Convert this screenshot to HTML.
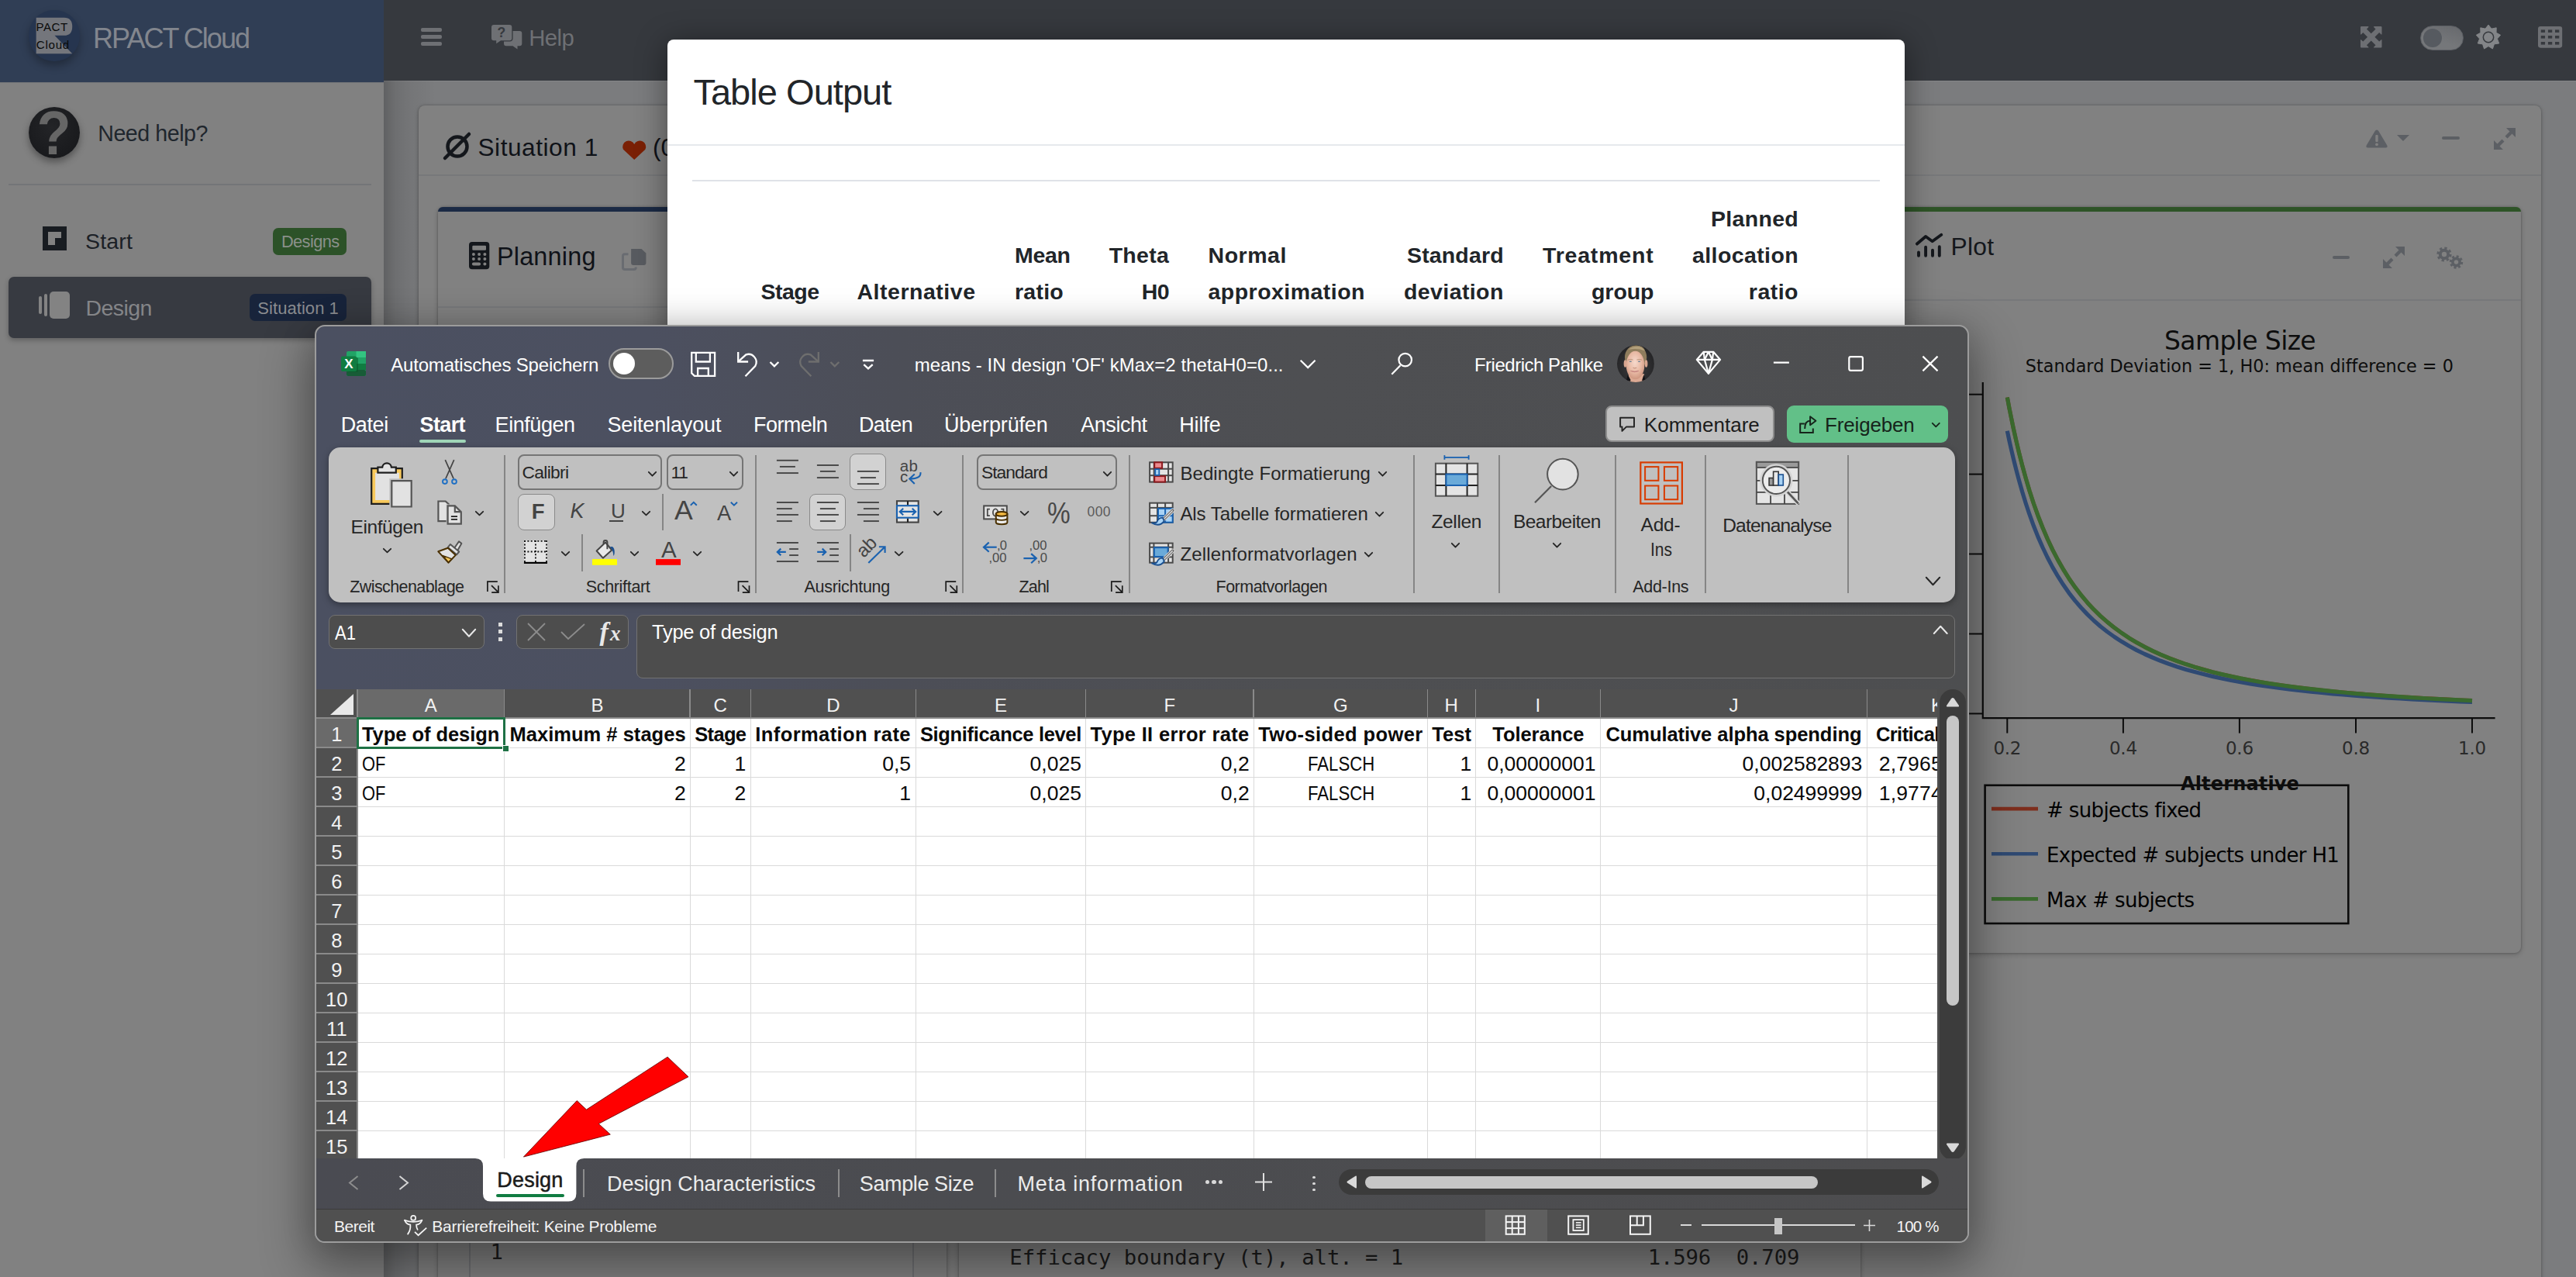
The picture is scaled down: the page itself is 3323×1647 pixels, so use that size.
<!DOCTYPE html>
<html lang="de">
<head>
<meta charset="utf-8">
<title>RPACT Cloud</title>
<style>
*{box-sizing:border-box;margin:0;padding:0}
html,body{width:3323px;height:1647px;overflow:hidden}
body{position:relative;background:#7b7c7e;font-family:"Liberation Sans",sans-serif;color:#111}
.abs{position:absolute}
.t{position:absolute;white-space:nowrap;line-height:1}
svg{position:absolute;overflow:visible}
/* ---------- page ---------- */
#navbar{left:495px;top:0;width:2828px;height:105px;background:#36393e;border-bottom:1.5px solid #858688}
#brand{left:0;top:0;width:495px;height:106.5px;background:#303e55;border-bottom:1.7px solid #737578}
#sidebar{left:0;top:106px;width:495px;height:1541px;background:#818181}
#sideshadow{left:495px;top:104px;width:70px;height:1543px;background:linear-gradient(90deg,rgba(0,0,0,.22) 0,rgba(0,0,0,.11) 15px,rgba(0,0,0,.05) 35px,rgba(0,0,0,0) 68px)}
#sitcard{left:540px;top:136px;width:2738px;height:1530px;background:#818181;border-radius:8px;box-shadow:0 0 3px rgba(0,0,0,.25),0 2px 6px rgba(0,0,0,.2)}
/* ---------- modal ---------- */
#modal{left:861px;top:51px;width:1596px;height:600px;background:#fff;border-radius:8px;box-shadow:0 6px 40px rgba(0,0,0,.45);overflow:hidden}
#modal>.in{position:absolute;left:-861px;top:-51px;width:3323px;height:1647px}
/* ---------- excel ---------- */
#excelshadow{left:406px;top:419px;width:2133.5px;height:1184px;border-radius:13px;box-shadow:0 28px 64px 8px rgba(0,0,0,.33),0 4px 44px rgba(0,0,0,.17)}
#excel{left:406px;top:419px;width:2133.5px;height:1184px;border-radius:13px;border:2px solid #9c9c9c;background:linear-gradient(90deg,#4b5061 0%,#4c5060 20%,#4c4e57 35%,#4e4f52 60%,#4d4e50 100%);overflow:hidden}
#excel>.in{position:absolute;left:-408px;top:-421px;width:3323px;height:1647px}
</style>
</head>
<body>
<div id="root" style="position:absolute;left:0;top:0;width:3323px;height:1647px;overflow:hidden">
<!-- ======== PAGE ======== -->
<div id="app">
<div class="abs" id="navbar"></div>
<div class="abs" id="sidebar"></div>
<div class="abs" id="sideshadow"></div>
<div class="abs" id="brand"></div>
<div class="abs" id="sitcard"></div>
<!-- brand -->
<div class="abs" style="left:37.4px;top:13.2px;width:65.3px;height:65.5px;border-radius:50%;background:#26354f;box-shadow:0 6px 12px rgba(0,0,0,.3)"></div>
<svg style="left:20px;top:0" width="120" height="100" viewBox="0 0 1532 1277"><path d="M340 290 H800 Q935 290 935 437 Q935 585 800 585 H645 L935 885 H340 Z" fill="#74767c"/></svg>
<div class="t" style="left:46.4px;top:27.1px;font-size:15.1px;color:#0a0a0a;letter-spacing:.55px">PACT</div>
<div class="t" style="left:46.8px;top:50.2px;font-size:15.1px;color:#0a0a0a;letter-spacing:.75px">Cloud</div>
<div class="t" style="left:120px;top:32px;font-size:36px;color:#82868e;letter-spacing:-1.98px">RPACT Cloud</div>
<!-- user panel -->
<div class="abs" style="left:37.3px;top:138px;width:66.2px;height:66.2px;border-radius:50%;background:radial-gradient(circle at 45% 40%,#232427,#18191c 80%);box-shadow:0 5px 10px rgba(0,0,0,.35)"></div>
<div class="t" style="left:44.5px;top:131.9px;font-size:80px;font-weight:bold;color:#666666;transform:scaleX(.9);">?</div>
<div class="t" style="left:126.2px;top:157.5px;font-size:28.6px;letter-spacing:-0.45px;color:#1f262d;">Need help?</div>
<div class="abs" style="left:11px;top:237px;width:468px;height:2px;background:#737578"></div>
<!-- nav: Start -->
<div class="abs" style="left:55px;top:292px;width:31px;height:31px;background:#181c21"></div>
<div class="abs" style="left:62px;top:299px;width:17px;height:8px;background:#818181"></div>
<div class="abs" style="left:62px;top:299px;width:9px;height:17px;background:#818181"></div>
<div class="t" style="left:110.0px;top:297.0px;font-size:28.5px;letter-spacing:0.18px;color:#1b2026;">Start</div>
<div class="abs" style="left:352px;top:294px;width:95px;height:35px;border-radius:7px;background:#2c5228"></div>
<div class="t" style="left:362.9px;top:301.4px;font-size:21.8px;letter-spacing:-0.59px;color:#8a908a;">Designs</div>
<!-- nav: Design (active) -->
<div class="abs" style="left:11px;top:357px;width:468px;height:79px;border-radius:7px;background:#373a41;box-shadow:0 3px 6px rgba(0,0,0,.25)"></div>
<div class="abs" style="left:50px;top:382px;width:4px;height:23px;border-radius:2px;background:#838383"></div>
<div class="abs" style="left:57px;top:379px;width:4px;height:29px;border-radius:2px;background:#838383"></div>
<div class="abs" style="left:64px;top:376px;width:26px;height:35px;border-radius:5px;background:#838383"></div>
<div class="t" style="left:110.6px;top:382.8px;font-size:28.5px;letter-spacing:-0.60px;color:#848588;">Design</div>
<div class="abs" style="left:322px;top:379px;width:125px;height:35px;border-radius:7px;background:#18243b"></div>
<div class="t" style="left:332.3px;top:386.5px;font-size:22px;letter-spacing:0.06px;color:#8a8c90;">Situation 1</div>
<!-- navbar -->
<div class="abs" style="left:543px;top:36px;width:27px;height:5px;border-radius:2px;background:#6e7074"></div>
<div class="abs" style="left:543px;top:45px;width:27px;height:5px;border-radius:2px;background:#6e7074"></div>
<div class="abs" style="left:543px;top:54px;width:27px;height:5px;border-radius:2px;background:#6e7074"></div>
<svg style="left:633.9px;top:31.8px" width="40" height="32" viewBox="0 0 40 32"><path d="M19 8 H36.3 Q39.3 8 39.3 11 V24.3 Q39.3 27.3 36.3 27.3 H33.5 V31.4 L27.5 27.3 H19 Q16 27.3 16 24.3 V11 Q16 8 19 8Z" fill="#6e7074"/><path d="M3 0 H23.3 Q26.3 0 26.3 3 V17.2 Q26.3 20.2 23.3 20.2 H12 L6.2 24.2 V20.2 H3 Q0 20.2 0 17.2 V3 Q0 0 3 0Z" fill="#6e7074" stroke="#36393e" stroke-width="2.6" paint-order="stroke"/><text x="12.8" y="16.3" font-family="Liberation Sans" font-weight="bold" font-size="17.5" fill="#36393e" text-anchor="middle">?</text></svg>
<div class="t" style="left:682.2px;top:34.1px;font-size:29.3px;letter-spacing:-0.52px;color:#6e7074;">Help</div>
<!-- navbar right icons -->
<svg style="left:3044.9px;top:33.8px" width="27.5" height="27.7" viewBox="0 0 100 100" fill="#6d6f73"><path d="M4 0H36Q40 0 37 4L29 12L50 33L71 12L63 4Q60 0 64 0H96Q100 0 100 4V36Q100 40 96 37L88 29L67 50L88 71L96 63Q100 60 100 64V96Q100 100 96 100H64Q60 100 63 96L71 88L50 67L29 88L37 96Q40 100 36 100H4Q0 100 0 96V64Q0 60 4 63L12 71L33 50L12 29L4 37Q0 40 0 36V4Q0 0 4 0Z"/></svg>
<div class="abs" style="left:3122.1px;top:32.9px;width:55.8px;height:32.1px;border-radius:16px;background:linear-gradient(200deg,#66686c,#75777a 60%);border:1.5px solid #5c5f64"></div>
<div class="abs" style="left:3125.9px;top:36.8px;width:24.2px;height:24.2px;border-radius:50%;background:#565a60"></div>
<svg style="left:3193.6px;top:31.6px" width="32" height="32" viewBox="-16 -16 32 32"><path d="M0.00 -15.90L3.97 -10.90L10.22 -12.18L10.05 -5.80L15.66 -2.76L11.42 2.01L13.77 7.95L7.46 8.89L5.44 14.94L0.00 11.60L-5.44 14.94L-7.46 8.89L-13.77 7.95L-11.42 2.01L-15.66 -2.76L-10.05 -5.80L-10.22 -12.18L-3.97 -10.90Z" fill="#838588" stroke="#838588" stroke-width="1" stroke-linejoin="round"/><circle r="6.7" fill="none" stroke="#36393e" stroke-width="1.5"/></svg>
<svg style="left:3274.1px;top:33.8px" width="31.2" height="27.7" viewBox="0 0 265 235"><rect width="265" height="235" rx="26" fill="#6d6f73"/><rect x="32" y="37" width="45" height="30" fill="#36393e"/><rect x="32" y="102" width="45" height="30" fill="#36393e"/><rect x="32" y="170" width="45" height="30" fill="#36393e"/><rect x="110" y="37" width="45" height="30" fill="#36393e"/><rect x="110" y="102" width="45" height="30" fill="#36393e"/><rect x="110" y="170" width="45" height="30" fill="#36393e"/><rect x="187" y="37" width="45" height="30" fill="#36393e"/><rect x="187" y="102" width="45" height="30" fill="#36393e"/><rect x="187" y="170" width="45" height="30" fill="#36393e"/></svg>
<!-- Situation card header -->
<div class="abs" style="left:540px;top:225px;width:2738px;height:2px;background:#77787a"></div>
<svg style="left:572px;top:171px" width="36" height="36" viewBox="0 0 36 36"><circle cx="18" cy="18" r="12.5" fill="none" stroke="#14171c" stroke-width="4.5"/><path d="M2 33L33 2" stroke="#14171c" stroke-width="4.5" stroke-linecap="round"/></svg>
<div class="t" style="left:616.5px;top:174.5px;font-size:31.6px;letter-spacing:0.54px;color:#0f1218;">Situation 1</div>
<svg style="left:801.6px;top:182.4px" width="32.4" height="24" viewBox="0 0 32 24"><path d="M16 24 L1.8 10.8 A7.55 7.55 0 0 1 16 3.9 A7.55 7.55 0 0 1 30.2 10.8Z" fill="#7a2005"/></svg>
<div class="t" style="left:842.0px;top:174.5px;font-size:31.6px;color:#0f1218;">(0</div>
<!-- sitcard right tools -->
<svg style="left:3052px;top:167px" width="28" height="24" viewBox="0 0 28 24"><path d="M14 0.5 Q15.5 0.5 16.3 2 L27.3 20.5 Q28.5 23.5 25.5 23.5 H2.5 Q-0.5 23.5 0.7 20.5 L11.7 2 Q12.5 0.5 14 0.5Z" fill="#5c5f64"/><rect x="12.3" y="7" width="3.4" height="9" rx="1" fill="#818181"/><circle cx="14" cy="19.3" r="1.9" fill="#818181"/></svg>
<svg style="left:3092px;top:174px" width="16" height="8" viewBox="0 0 16 8"><path d="M0 0H16L8 8Z" fill="#5c5f64"/></svg>
<div class="abs" style="left:3150px;top:176px;width:23px;height:4px;border-radius:2px;background:#5c5f64"></div>
<svg class="exp" style="left:3217px;top:165px" width="28" height="28" viewBox="0 0 28 28" fill="#5c5f64"><path d="M16 0H28V12L23.5 7.5L17.5 13.5L14.5 10.5L20.5 4.5Z"/><path d="M12 28H0V16L4.5 20.5L10.5 14.5L13.5 17.5L7.5 23.5Z"/></svg>
<!-- Planning card -->
<div class="abs" style="left:565px;top:267px;width:656px;height:1395px;border-radius:8px;background:#818181;box-shadow:0 0 3px rgba(0,0,0,.25),0 2px 6px rgba(0,0,0,.2)"></div>
<div class="abs" style="left:565px;top:267px;width:656px;height:6px;border-radius:8px 8px 0 0;background:#1b2a45"></div>
<div class="abs" style="left:565px;top:395px;width:656px;height:2px;background:#77787a"></div>
<svg style="left:605.3px;top:312px" width="26.3" height="35.2" viewBox="0 0 26.3 35.2"><rect width="26.3" height="35.2" rx="4" fill="#14171c"/><rect x="4.3" y="4.8" width="17.7" height="6" rx="1.2" fill="#818181"/><g fill="#818181"><circle cx="5.9" cy="15.9" r="2"/><circle cx="13.1" cy="15.9" r="2"/><circle cx="20.4" cy="15.9" r="2"/><circle cx="5.9" cy="22.1" r="2"/><circle cx="13.1" cy="22.1" r="2"/><circle cx="20.4" cy="22.1" r="2"/><rect x="3.9" y="26.4" width="11.2" height="4" rx="2"/><circle cx="20.4" cy="28.4" r="2"/></g></svg>
<div class="t" style="left:640.9px;top:315.0px;font-size:32.4px;letter-spacing:0.22px;color:#0f1218;">Planning</div>
<svg style="left:801.9px;top:321px" width="31.4" height="28" viewBox="0 0 31.4 28"><path d="M12.1 0H25.5L31.4 5.5V18Q31.4 21 28.4 21H15.1Q12.1 21 12.1 18Z" fill="#585b60"/><path d="M8.5 6.8H4Q1.5 6.8 1.5 9.3V24Q1.5 26.5 4 26.5H15.8Q18.3 26.5 18.3 24V23.5" fill="none" stroke="#696c71" stroke-width="3"/></svg>
<!-- Plot card -->
<div class="abs" style="left:2432px;top:267px;width:820px;height:962px;border-radius:8px;background:#818181;box-shadow:0 0 3px rgba(0,0,0,.25),0 2px 6px rgba(0,0,0,.2)"></div>
<div class="abs" style="left:2432px;top:267px;width:820px;height:6px;border-radius:8px 8px 0 0;background:#2e5427"></div>
<div class="abs" style="left:2432px;top:386px;width:820px;height:2px;background:#77787a"></div>
<svg style="left:2471.1px;top:301.1px" width="34.8" height="30.8" viewBox="0 0 34.8 30.8"><g stroke="#14171c" stroke-width="3.9" stroke-linecap="round" fill="none"><path d="M4 24.4V28.8M13.1 17.8V28.8M22 21.8V28.8M30.8 17.3V28.8"/><path d="M1.9 13.6L13.1 4L21.7 10.3L33.3 1.8" stroke-linejoin="round"/></g></svg>
<div class="t" style="left:2516.5px;top:302.5px;font-size:31.8px;letter-spacing:0.23px;color:#14171c;">Plot</div>
<div class="abs" style="left:3009px;top:330px;width:22px;height:4px;border-radius:2px;background:#5c5f64"></div>
<svg style="left:3074px;top:318px" width="28" height="28" viewBox="0 0 28 28" fill="#5c5f64"><path d="M16 0H28V12L23.5 7.5L17.5 13.5L14.5 10.5L20.5 4.5Z"/><path d="M12 28H0V16L4.5 20.5L10.5 14.5L13.5 17.5L7.5 23.5Z"/></svg>
<svg style="left:3144px;top:319px" width="34" height="28" viewBox="0 0 34 28"><g fill="none" stroke="#5c5f64"><circle cx="9" cy="9" r="5.2" stroke-width="4"/><circle cx="9" cy="9" r="8" stroke-width="3.2" stroke-dasharray="3.2 3.1"/><circle cx="24.5" cy="19" r="4.6" stroke-width="3.6"/><circle cx="24.5" cy="19" r="7.2" stroke-width="3" stroke-dasharray="2.9 2.75"/></g></svg>
<div class="t" style="left:2792.0px;top:423.3px;font-size:33px;font-family:'DejaVu Sans',sans-serif;letter-spacing:-0.63px;color:#0d0d0d;">Sample Size</div>
<div class="t" style="left:2612.8px;top:460.6px;font-size:22.3px;font-family:'DejaVu Sans',sans-serif;letter-spacing:0.01px;color:#0d0d0d;">Standard Deviation = 1, H0: mean difference = 0</div>
<svg style="left:0;top:0" width="3323" height="1647" viewBox="0 0 3323 1647"><path d="M2557.8 493V926.2H3218.6" fill="none" stroke="#0c0c0c" stroke-width="2.2"/><path d="M2539.8 508.7H2557.8" stroke="#0c0c0c" stroke-width="2"/><path d="M2539.8 611.6H2557.8" stroke="#0c0c0c" stroke-width="2"/><path d="M2539.8 714.5H2557.8" stroke="#0c0c0c" stroke-width="2"/><path d="M2539.8 817.5H2557.8" stroke="#0c0c0c" stroke-width="2"/><path d="M2539.8 920.4H2557.8" stroke="#0c0c0c" stroke-width="2"/><path d="M2589.3 926V945.6" stroke="#0c0c0c" stroke-width="2"/><path d="M2738.9 926V945.6" stroke="#0c0c0c" stroke-width="2"/><path d="M2888.9 926V945.6" stroke="#0c0c0c" stroke-width="2"/><path d="M3039 926V945.6" stroke="#0c0c0c" stroke-width="2"/><path d="M3189 926V945.6" stroke="#0c0c0c" stroke-width="2"/><path d="M2589.3 512.4L2590.2 517.0L2591.9 526.2L2594.3 538.1L2597.2 552.1L2600.6 567.3L2604.4 583.4L2608.6 600.0L2613.2 616.6L2618.1 633.2L2623.4 649.5L2629.0 665.2L2635.0 680.5L2641.2 695.0L2647.7 708.9L2654.6 722.1L2661.7 734.5L2669.0 746.2L2676.7 757.2L2684.6 767.5L2692.7 777.2L2701.1 786.2L2709.7 794.6L2718.6 802.4L2727.7 809.7L2737.1 816.5L2746.6 822.9L2756.4 828.8L2766.5 834.3L2776.7 839.4L2787.1 844.2L2797.8 848.6L2808.6 852.7L2819.7 856.6L2831.0 860.2L2842.5 863.5L2854.1 866.7L2866.0 869.6L2878.1 872.3L2890.3 874.9L2902.8 877.2L2915.4 879.5L2928.2 881.6L2941.2 883.5L2954.4 885.4L2967.8 887.1L2981.3 888.7L2995.0 890.2L3008.9 891.7L3023.0 893.0L3037.3 894.3L3051.7 895.5L3066.3 896.6L3081.0 897.7L3096.0 898.7L3111.1 899.6L3126.3 900.5L3141.7 901.3L3157.3 902.1L3173.1 902.9L3189.0 903.6" fill="none" stroke="#8e3524" stroke-width="5" stroke-linejoin="round"/><path d="M2589.3 555.8L2590.2 559.9L2591.9 568.1L2594.3 578.7L2597.2 591.2L2600.6 604.8L2604.4 619.2L2608.6 634.0L2613.2 648.9L2618.1 663.7L2623.4 678.3L2629.0 692.4L2635.0 706.0L2641.2 719.0L2647.7 731.4L2654.6 743.2L2661.7 754.3L2669.0 764.8L2676.7 774.6L2684.6 783.8L2692.7 792.4L2701.1 800.5L2709.7 808.0L2718.6 815.0L2727.7 821.5L2737.1 827.6L2746.6 833.3L2756.4 838.6L2766.5 843.5L2776.7 848.0L2787.1 852.3L2797.8 856.3L2808.6 860.0L2819.7 863.4L2831.0 866.6L2842.5 869.6L2854.1 872.4L2866.0 875.0L2878.1 877.5L2890.3 879.7L2902.8 881.9L2915.4 883.9L2928.2 885.7L2941.2 887.5L2954.4 889.1L2967.8 890.7L2981.3 892.1L2995.0 893.5L3008.9 894.8L3023.0 896.0L3037.3 897.1L3051.7 898.2L3066.3 899.2L3081.0 900.1L3096.0 901.0L3111.1 901.9L3126.3 902.6L3141.7 903.4L3157.3 904.1L3173.1 904.8L3189.0 905.4" fill="none" stroke="#2f4a73" stroke-width="5.2" stroke-linejoin="round"/><path d="M2589.3 512.4L2590.2 517.0L2591.9 526.2L2594.3 538.1L2597.2 552.1L2600.6 567.3L2604.4 583.4L2608.6 600.0L2613.2 616.6L2618.1 633.2L2623.4 649.5L2629.0 665.2L2635.0 680.5L2641.2 695.0L2647.7 708.9L2654.6 722.1L2661.7 734.5L2669.0 746.2L2676.7 757.2L2684.6 767.5L2692.7 777.2L2701.1 786.2L2709.7 794.6L2718.6 802.4L2727.7 809.7L2737.1 816.5L2746.6 822.9L2756.4 828.8L2766.5 834.3L2776.7 839.4L2787.1 844.2L2797.8 848.6L2808.6 852.7L2819.7 856.6L2831.0 860.2L2842.5 863.5L2854.1 866.7L2866.0 869.6L2878.1 872.3L2890.3 874.9L2902.8 877.2L2915.4 879.5L2928.2 881.6L2941.2 883.5L2954.4 885.4L2967.8 887.1L2981.3 888.7L2995.0 890.2L3008.9 891.7L3023.0 893.0L3037.3 894.3L3051.7 895.5L3066.3 896.6L3081.0 897.7L3096.0 898.7L3111.1 899.6L3126.3 900.5L3141.7 901.3L3157.3 902.1L3173.1 902.9L3189.0 903.6" fill="none" stroke="#3a6a2e" stroke-width="5.2" stroke-linejoin="round"/><rect x="2560.6" y="1012.8" width="468.7" height="178.2" fill="none" stroke="#0c0c0c" stroke-width="2.6"/><path d="M2569 1043.1H2629" stroke="#7e2e1d" stroke-width="4.6"/><path d="M2569 1101.3H2629" stroke="#2f4a73" stroke-width="4.6"/><path d="M2569 1159.4H2629" stroke="#3a6a2e" stroke-width="4.6"/></svg>
<div class="t" style="left:2571.4px;top:953.8px;font-size:23px;font-family:'DejaVu Sans',sans-serif;letter-spacing:-0.26px;color:#2a2a2a;">0.2</div>
<div class="t" style="left:2721.0px;top:953.8px;font-size:23px;font-family:'DejaVu Sans',sans-serif;letter-spacing:-0.26px;color:#2a2a2a;">0.4</div>
<div class="t" style="left:2871.0px;top:953.8px;font-size:23px;font-family:'DejaVu Sans',sans-serif;letter-spacing:-0.26px;color:#2a2a2a;">0.6</div>
<div class="t" style="left:3021.1px;top:953.8px;font-size:23px;font-family:'DejaVu Sans',sans-serif;letter-spacing:-0.26px;color:#2a2a2a;">0.8</div>
<div class="t" style="left:3171.1px;top:953.8px;font-size:23px;font-family:'DejaVu Sans',sans-serif;letter-spacing:-0.26px;color:#2a2a2a;">1.0</div>
<div class="t" style="left:2813.0px;top:998.7px;font-size:24px;font-weight:bold;font-family:'DejaVu Sans',sans-serif;letter-spacing:0.16px;color:#0d0d0d;">Alternative</div>
<div class="t" style="left:2640.0px;top:1032.0px;font-size:26px;font-family:'DejaVu Sans',sans-serif;letter-spacing:-0.63px;color:#000;"># subjects fixed</div>
<div class="t" style="left:2640.0px;top:1090.3px;font-size:26px;font-family:'DejaVu Sans',sans-serif;letter-spacing:-0.68px;color:#000;">Expected # subjects under H1</div>
<div class="t" style="left:2640.0px;top:1148.0px;font-size:26px;font-family:'DejaVu Sans',sans-serif;letter-spacing:-0.67px;color:#000;">Max # subjects</div>
<!-- bottom output -->
<div class="abs" style="left:1237px;top:267px;width:1163px;height:1395px;border-radius:8px;background:#818181;box-shadow:0 0 3px rgba(0,0,0,.25),0 2px 6px rgba(0,0,0,.2)"></div>
<div class="abs" style="left:605px;top:1400px;width:574px;height:260px;border-radius:8px;border:2px solid #6e6f72"></div>
<div class="t" style="left:632.5px;top:1600.9px;font-size:27.3px;font-family:'DejaVu Sans Mono',monospace;color:#1c1c1c;">1</div>
<div class="t" style="left:1302.3px;top:1607.7px;font-size:27.3px;font-family:'DejaVu Sans Mono',monospace;letter-spacing:-0.05px;color:#1c1c1c;">Efficacy boundary (t), alt. = 1</div>
<div class="t" style="left:2125.7px;top:1607.7px;font-size:27.3px;font-family:'DejaVu Sans Mono',monospace;letter-spacing:-0.14px;color:#1c1c1c;white-space:pre;">1.596  0.709</div>

<!--BOTTOM-->

</div>
<!-- ======== MODAL ======== -->
<div class="abs" id="modal"><div class="in">
<div class="t" style="left:894.4px;top:94.9px;font-size:47px;letter-spacing:-0.96px;color:#212529;">Table Output</div>
<div class="abs" style="left:861px;top:185.5px;width:1596px;height:2px;background:#e6e9ed"></div>
<div class="abs" style="left:893px;top:231.5px;width:1532px;height:2px;background:#dfe2e8"></div>
<div class="t" style="left:981.4px;top:361.6px;font-size:28.5px;font-weight:bold;letter-spacing:-0.46px;color:#212529;">Stage</div>
<div class="t" style="left:1105.5px;top:361.6px;font-size:28.5px;font-weight:bold;letter-spacing:0.52px;color:#212529;">Alternative</div>
<div class="t" style="left:1309.0px;top:314.9px;font-size:28.5px;font-weight:bold;letter-spacing:-0.29px;color:#212529;">Mean</div>
<div class="t" style="left:1309.0px;top:361.6px;font-size:28.5px;font-weight:bold;letter-spacing:0.25px;color:#212529;">ratio</div>
<div class="t" style="left:1430.7px;top:314.9px;font-size:28.5px;font-weight:bold;letter-spacing:0.26px;color:#212529;">Theta</div>
<div class="t" style="left:1472.7px;top:361.6px;font-size:28.5px;font-weight:bold;letter-spacing:-0.57px;color:#212529;">H0</div>
<div class="t" style="left:1558.5px;top:314.9px;font-size:28.5px;font-weight:bold;letter-spacing:0.55px;color:#212529;">Normal</div>
<div class="t" style="left:1558.5px;top:361.6px;font-size:28.5px;font-weight:bold;letter-spacing:0.47px;color:#212529;">approximation</div>
<div class="t" style="left:1815.0px;top:314.9px;font-size:28.5px;font-weight:bold;letter-spacing:0.15px;color:#212529;">Standard</div>
<div class="t" style="left:1811.0px;top:361.6px;font-size:28.5px;font-weight:bold;letter-spacing:0.40px;color:#212529;">deviation</div>
<div class="t" style="left:1990.0px;top:314.9px;font-size:28.5px;font-weight:bold;letter-spacing:0.81px;color:#212529;">Treatment</div>
<div class="t" style="left:2053.0px;top:361.6px;font-size:28.5px;font-weight:bold;letter-spacing:-0.05px;color:#212529;">group</div>
<div class="t" style="left:2207.0px;top:267.9px;font-size:28.5px;font-weight:bold;letter-spacing:0.31px;color:#212529;">Planned</div>
<div class="t" style="left:2183.0px;top:314.9px;font-size:28.5px;font-weight:bold;letter-spacing:0.40px;color:#212529;">allocation</div>
<div class="t" style="left:2255.8px;top:361.6px;font-size:28.5px;font-weight:bold;letter-spacing:0.49px;color:#212529;">ratio</div>

</div></div>
<!-- ======== EXCEL ======== -->
<div class="abs" id="excelshadow"></div>
<div class="abs" id="excel"><div class="in">
<!-- title bar -->
<div class="t" style="left:504.2px;top:459.2px;font-size:24px;letter-spacing:-0.18px;color:#ffffff;">Automatisches Speichern</div>
<div class="abs" style="left:785.2px;top:449.2px;width:83.7px;height:39.5px;background:#5d5d5d;border:2px solid #9b9b9b;border-radius:20px;"></div>
<div class="abs" style="left:791.0px;top:455.0px;width:28.0px;height:28.0px;background:#fff;border-radius:14px;"></div>
<div class="t" style="left:1179.7px;top:458.7px;font-size:24px;letter-spacing:0.06px;color:#ffffff;">means - IN design 'OF' kMax=2 thetaH0=0...</div>
<div class="t" style="left:1901.9px;top:458.7px;font-size:24px;letter-spacing:-0.48px;color:#ffffff;">Friedrich Pahlke</div>
<svg style="left:2086px;top:444.9px" width="47.9" height="48.2" viewBox="200 180 875 880"><defs><clipPath id="avc"><circle cx="637.5" cy="620" r="437.5"/></clipPath><radialGradient id="avbg" cx="50%" cy="60%" r="60%"><stop offset="0" stop-color="#3c3c3e"/><stop offset="1" stop-color="#232325"/></radialGradient><radialGradient id="avsk" cx="48%" cy="40%" r="65%"><stop offset="0" stop-color="#f6d9cc"/><stop offset=".55" stop-color="#e8b9a4"/><stop offset="1" stop-color="#c98f78"/></radialGradient></defs><g clip-path="url(#avc)"><rect x="200" y="180" width="875" height="880" fill="url(#avbg)"/><path d="M470 860H840V1070H470Z" fill="#dcaa94"/><path d="M400 1070L455 880L520 1000L500 1070ZM890 1070L830 880L790 1000L800 1070Z" fill="#121216"/><ellipse cx="640" cy="470" rx="258" ry="285" fill="#8f7d5d"/><ellipse cx="392" cy="618" rx="34" ry="88" fill="#d9a690"/><ellipse cx="886" cy="618" rx="34" ry="88" fill="#d9a690"/><ellipse cx="630" cy="655" rx="215" ry="335" fill="url(#avsk)"/><path d="M410 470Q400 300 520 225Q640 165 780 215Q890 270 875 470Q850 360 790 325Q640 295 480 330Q425 380 410 470Z" fill="#8f7d5d"/><path d="M470 285Q570 200 720 215Q810 240 850 315Q700 250 470 285Z" fill="#b3a07c"/><ellipse cx="515" cy="568" rx="32" ry="13" fill="#6b8196"/><ellipse cx="722" cy="568" rx="32" ry="13" fill="#6b8196"/><path d="M455 530Q515 505 575 528M665 528Q725 505 785 530" stroke="#a88468" stroke-width="14" fill="none"/><path d="M575 715Q615 740 660 715" stroke="#b98470" stroke-width="16" fill="none"/><path d="M520 790Q615 840 710 790Q615 815 520 790Z" fill="#c07f7c" stroke="#c07f7c" stroke-width="12"/></g></svg>
<!-- tabs -->
<div class="t" style="left:439.7px;top:535.2px;font-size:27px;letter-spacing:-0.39px;color:#ffffff;">Datei</div>
<div class="t" style="left:541.5px;top:535.2px;font-size:27px;font-weight:bold;letter-spacing:-0.60px;color:#ffffff;">Start</div>
<div class="abs" style="left:541.0px;top:567.3px;width:60.0px;height:3.6px;background:#9fd5b7;border-radius:2px;"></div>
<div class="t" style="left:638.6px;top:535.2px;font-size:27px;letter-spacing:-0.45px;color:#ffffff;">Einfügen</div>
<div class="t" style="left:783.4px;top:535.4px;font-size:27px;letter-spacing:-0.14px;color:#ffffff;">Seitenlayout</div>
<div class="t" style="left:972.0px;top:535.4px;font-size:27px;letter-spacing:-0.55px;color:#ffffff;">Formeln</div>
<div class="t" style="left:1107.9px;top:535.4px;font-size:27px;letter-spacing:-0.53px;color:#ffffff;">Daten</div>
<div class="t" style="left:1218.0px;top:535.4px;font-size:27px;letter-spacing:-0.15px;color:#ffffff;">Überprüfen</div>
<div class="t" style="left:1394.3px;top:535.4px;font-size:27px;letter-spacing:-0.48px;color:#ffffff;">Ansicht</div>
<div class="t" style="left:1521.2px;top:535.4px;font-size:27px;letter-spacing:-0.12px;color:#ffffff;">Hilfe</div>
<div class="abs" style="left:2071.3px;top:523.2px;width:217.3px;height:47.1px;background:#c0c0c0;border:2px solid #8c8c8c;border-radius:8px;"></div>
<div class="t" style="left:2120.8px;top:535.0px;font-size:26px;letter-spacing:0.02px;color:#1c1c1c;">Kommentare</div>
<div class="abs" style="left:2305.3px;top:523.4px;width:208.2px;height:47.4px;background:#62c088;border-radius:9px;"></div>
<div class="t" style="left:2354.1px;top:535.0px;font-size:26px;letter-spacing:-0.18px;color:#16241b;">Freigeben</div>
<svg style="left:2492.0px;top:545.0px" width="10.6" height="6.2" viewBox="0 0 10.6 6.2"><path d="M0.8 0.8L5.3 5.4L9.799999999999999 0.8" fill="none" stroke="#16241b" stroke-width="1.8" stroke-linecap="round" stroke-linejoin="round"/></svg>
<!-- ribbon -->
<div class="abs" style="left:424.3px;top:577.0px;width:2097.4px;height:199.6px;background:#c0c0c0;border-radius:15px;box-shadow:0 3px 8px rgba(0,0,0,.35);"></div>
<div class="abs" style="left:650.0px;top:587.4px;width:2.0px;height:177.4px;background:#858585;"></div>
<div class="abs" style="left:974.1px;top:587.4px;width:2.0px;height:177.4px;background:#858585;"></div>
<div class="abs" style="left:1241.4px;top:587.4px;width:2.0px;height:177.4px;background:#858585;"></div>
<div class="abs" style="left:1455.6px;top:587.4px;width:2.0px;height:177.4px;background:#858585;"></div>
<div class="abs" style="left:1823.0px;top:587.4px;width:2.0px;height:177.4px;background:#858585;"></div>
<div class="abs" style="left:1932.9px;top:587.4px;width:2.0px;height:177.4px;background:#858585;"></div>
<div class="abs" style="left:2082.9px;top:587.4px;width:2.0px;height:177.4px;background:#858585;"></div>
<div class="abs" style="left:2199.2px;top:587.4px;width:2.0px;height:177.4px;background:#858585;"></div>
<div class="abs" style="left:2382.8px;top:587.4px;width:2.0px;height:177.4px;background:#858585;"></div>
<div class="t" style="left:451.2px;top:746.6px;font-size:21.5px;letter-spacing:-0.58px;color:#262626;">Zwischenablage</div>
<div class="t" style="left:755.7px;top:746.6px;font-size:21.5px;letter-spacing:-0.32px;color:#262626;">Schriftart</div>
<div class="t" style="left:1037.5px;top:746.6px;font-size:21.5px;letter-spacing:-0.28px;color:#262626;">Ausrichtung</div>
<div class="t" style="left:1314.6px;top:746.6px;font-size:21.5px;letter-spacing:-0.86px;color:#262626;">Zahl</div>
<div class="t" style="left:1568.5px;top:746.6px;font-size:21.5px;letter-spacing:-0.50px;color:#262626;">Formatvorlagen</div>
<div class="t" style="left:2106.3px;top:746.6px;font-size:21.5px;letter-spacing:-0.31px;color:#262626;">Add-Ins</div>
<div class="t" style="left:452.5px;top:668.3px;font-size:24.5px;letter-spacing:-0.40px;color:#262626;">Einfügen</div>
<svg style="left:493.6px;top:706.5px" width="11" height="6.2" viewBox="0 0 11 6.2"><path d="M0.8 0.8L5.5 5.4L10.2 0.8" fill="none" stroke="#262626" stroke-width="1.8" stroke-linecap="round" stroke-linejoin="round"/></svg>
<svg style="left:612.6px;top:658.7px" width="11" height="6.2" viewBox="0 0 11 6.2"><path d="M0.8 0.8L5.5 5.4L10.2 0.8" fill="none" stroke="#262626" stroke-width="1.8" stroke-linecap="round" stroke-linejoin="round"/></svg>
<div class="abs" style="left:668.0px;top:585.7px;width:185.9px;height:46.5px;background:#c0c0c0;border:2px solid #757575;border-radius:8px;"></div>
<div class="t" style="left:673.4px;top:597.7px;font-size:22.8px;letter-spacing:-0.65px;color:#262626;">Calibri</div>
<svg style="left:836.3px;top:607.5px" width="11" height="6.5" viewBox="0 0 11 6.5"><path d="M0.8 0.8L5.5 5.7L10.2 0.8" fill="none" stroke="#262626" stroke-width="1.8" stroke-linecap="round" stroke-linejoin="round"/></svg>
<div class="abs" style="left:859.9px;top:585.7px;width:99.5px;height:46.5px;background:#c0c0c0;border:2px solid #757575;border-radius:8px;"></div>
<div class="t" style="left:865.4px;top:597.7px;font-size:22.8px;letter-spacing:-1.13px;color:#262626;">11</div>
<svg style="left:941.4px;top:607.5px" width="11" height="6.5" viewBox="0 0 11 6.5"><path d="M0.8 0.8L5.5 5.7L10.2 0.8" fill="none" stroke="#262626" stroke-width="1.8" stroke-linecap="round" stroke-linejoin="round"/></svg>
<div class="abs" style="left:668.0px;top:637.2px;width:47.5px;height:47.2px;background:#d2d2d2;border:1.6px solid #8a8a8a;border-radius:8px;"></div>
<div class="t" style="left:685.7px;top:645.6px;font-size:27.5px;font-weight:bold;letter-spacing:-4.20px;color:#444;">F</div>
<div class="t" style="left:735.4px;top:646.0px;font-size:27px;font-style:italic;letter-spacing:-1.01px;color:#444;">K</div>
<div class="t" style="left:788.0px;top:645.9px;font-size:26px;letter-spacing:-4.78px;color:#444;">U</div>
<div class="abs" style="left:786.0px;top:671.0px;width:18.0px;height:1.9px;background:#444;"></div>
<svg style="left:828.3px;top:659.0px" width="11" height="6.2" viewBox="0 0 11 6.2"><path d="M0.8 0.8L5.5 5.4L10.2 0.8" fill="none" stroke="#262626" stroke-width="1.8" stroke-linecap="round" stroke-linejoin="round"/></svg>
<div class="abs" style="left:854.0px;top:637.2px;width:2.0px;height:47.2px;background:#858585;"></div>
<div class="t" style="left:870.0px;top:640.7px;font-size:35.6px;letter-spacing:-1.75px;color:#444;">A</div>
<svg style="left:890.4px;top:647.2px" width="9.6" height="5.4" viewBox="0 0 9.6 5.4"><path d="M0.8 4.8L4.8 0.9L8.8 4.8" fill="none" stroke="#1a62b0" stroke-width="1.9"/></svg>
<div class="t" style="left:925.0px;top:647.6px;font-size:27.4px;letter-spacing:-0.38px;color:#444;">A</div>
<svg style="left:942.2px;top:647.2px" width="9.8" height="5.6" viewBox="0 0 9.8 5.6"><path d="M0.8 0.8L4.9 4.8L9 0.8" fill="none" stroke="#1a62b0" stroke-width="1.9"/></svg>
<svg style="left:724.3px;top:710.5px" width="11" height="6.2" viewBox="0 0 11 6.2"><path d="M0.8 0.8L5.5 5.4L10.2 0.8" fill="none" stroke="#262626" stroke-width="1.8" stroke-linecap="round" stroke-linejoin="round"/></svg>
<svg style="left:812.5px;top:710.5px" width="11" height="6.2" viewBox="0 0 11 6.2"><path d="M0.8 0.8L5.5 5.4L10.2 0.8" fill="none" stroke="#262626" stroke-width="1.8" stroke-linecap="round" stroke-linejoin="round"/></svg>
<div class="t" style="left:852.9px;top:693.6px;font-size:29.5px;letter-spacing:-0.98px;color:#444;">A</div>
<svg style="left:894.4px;top:710.5px" width="11" height="6.2" viewBox="0 0 11 6.2"><path d="M0.8 0.8L5.5 5.4L10.2 0.8" fill="none" stroke="#262626" stroke-width="1.8" stroke-linecap="round" stroke-linejoin="round"/></svg>
<div class="t" style="left:1160.8px;top:590.8px;font-size:20.5px;letter-spacing:0.35px;color:#444;">ab</div>
<div class="t" style="left:1161.0px;top:605.2px;font-size:20.5px;letter-spacing:-1.25px;color:#444;">c</div>
<div class="t" style="left:1117px;top:699px;font-size:24px;color:#444;transform:rotate(-45deg);transform-origin:0 100%;letter-spacing:-.5px">ab</div>
<svg style="left:1204.3px;top:658.7px" width="11.3" height="6.2" viewBox="0 0 11.3 6.2"><path d="M0.8 0.8L5.65 5.4L10.5 0.8" fill="none" stroke="#262626" stroke-width="1.8" stroke-linecap="round" stroke-linejoin="round"/></svg>
<svg style="left:1154.4px;top:710.6px" width="11.3" height="6.2" viewBox="0 0 11.3 6.2"><path d="M0.8 0.8L5.65 5.4L10.5 0.8" fill="none" stroke="#262626" stroke-width="1.8" stroke-linecap="round" stroke-linejoin="round"/></svg>
<div class="abs" style="left:1260.4px;top:585.7px;width:180.6px;height:46.5px;background:#c0c0c0;border:2px solid #757575;border-radius:8px;"></div>
<div class="t" style="left:1265.9px;top:597.7px;font-size:22.8px;letter-spacing:-0.94px;color:#262626;">Standard</div>
<svg style="left:1422.6px;top:607.5px" width="11" height="6.5" viewBox="0 0 11 6.5"><path d="M0.8 0.8L5.5 5.7L10.2 0.8" fill="none" stroke="#262626" stroke-width="1.8" stroke-linecap="round" stroke-linejoin="round"/></svg>
<div class="t" style="left:1351.2px;top:642.8px;font-size:38px;transform:scaleX(0.8790);transform-origin:0 50%;color:#484848;">%</div>
<div class="t" style="left:1402.6px;top:651.7px;font-size:17.5px;letter-spacing:0.37px;color:#5a5a5a;">000</div>
<svg style="left:1316.4px;top:658.7px" width="11.3" height="6.2" viewBox="0 0 11.3 6.2"><path d="M0.8 0.8L5.65 5.4L10.5 0.8" fill="none" stroke="#262626" stroke-width="1.8" stroke-linecap="round" stroke-linejoin="round"/></svg>
<div class="t" style="left:1286.0px;top:695.6px;font-size:16.6px;letter-spacing:-0.77px;color:#4a4a4a;">,0</div>
<div class="t" style="left:1275.5px;top:711.9px;font-size:16.6px;letter-spacing:-0.09px;color:#4a4a4a;">,00</div>
<div class="t" style="left:1327.5px;top:695.6px;font-size:16.6px;letter-spacing:-0.09px;color:#4a4a4a;">,00</div>
<div class="t" style="left:1337.8px;top:711.9px;font-size:16.6px;letter-spacing:-0.77px;color:#4a4a4a;">,0</div>
<div class="t" style="left:1522.4px;top:599.2px;font-size:24.0px;letter-spacing:0.07px;color:#262626;">Bedingte Formatierung</div>
<svg style="left:1777.5px;top:607.5px" width="11" height="6.5" viewBox="0 0 11 6.5"><path d="M0.8 0.8L5.5 5.7L10.2 0.8" fill="none" stroke="#262626" stroke-width="1.8" stroke-linecap="round" stroke-linejoin="round"/></svg>
<div class="t" style="left:1522.4px;top:650.9px;font-size:24.0px;letter-spacing:-0.06px;color:#262626;">Als Tabelle formatieren</div>
<svg style="left:1774.0px;top:659.5px" width="11" height="6.5" viewBox="0 0 11 6.5"><path d="M0.8 0.8L5.5 5.7L10.2 0.8" fill="none" stroke="#262626" stroke-width="1.8" stroke-linecap="round" stroke-linejoin="round"/></svg>
<div class="t" style="left:1522.4px;top:702.7px;font-size:24.0px;letter-spacing:0.15px;color:#262626;">Zellenformatvorlagen</div>
<svg style="left:1760.3px;top:711.5px" width="11" height="6.5" viewBox="0 0 11 6.5"><path d="M0.8 0.8L5.5 5.7L10.2 0.8" fill="none" stroke="#262626" stroke-width="1.8" stroke-linecap="round" stroke-linejoin="round"/></svg>
<div class="t" style="left:1846.4px;top:661.0px;font-size:24.5px;letter-spacing:-0.35px;color:#262626;">Zellen</div>
<svg style="left:1872.3px;top:700.0px" width="11" height="6.5" viewBox="0 0 11 6.5"><path d="M0.8 0.8L5.5 5.7L10.2 0.8" fill="none" stroke="#262626" stroke-width="1.8" stroke-linecap="round" stroke-linejoin="round"/></svg>
<div class="t" style="left:1952.0px;top:661.0px;font-size:24.5px;letter-spacing:-0.56px;color:#262626;">Bearbeiten</div>
<svg style="left:2002.8px;top:700.0px" width="11" height="6.5" viewBox="0 0 11 6.5"><path d="M0.8 0.8L5.5 5.7L10.2 0.8" fill="none" stroke="#262626" stroke-width="1.8" stroke-linecap="round" stroke-linejoin="round"/></svg>
<div class="t" style="left:2116.6px;top:665.3px;font-size:24.5px;letter-spacing:-0.24px;color:#262626;">Add-</div>
<div class="t" style="left:2128.7px;top:696.8px;font-size:24.5px;transform:scaleX(0.8567);transform-origin:0 50%;color:#262626;">Ins</div>
<div class="t" style="left:2222.2px;top:665.6px;font-size:24.5px;letter-spacing:-0.78px;color:#262626;">Datenanalyse</div>
<svg style="left:2484.2px;top:744.0px" width="19" height="11" viewBox="0 0 19 11"><path d="M0.8 0.8L9.5 10.2L18.2 0.8" fill="none" stroke="#262626" stroke-width="2" stroke-linecap="round" stroke-linejoin="round"/></svg>
<div class="abs" style="left:1096.3px;top:585.3px;width:46.9px;height:47.1px;background:#d2d2d2;border:1.6px solid #8a8a8a;border-radius:8px;"></div>
<div class="abs" style="left:1044.3px;top:637.4px;width:46.9px;height:47.0px;background:#d2d2d2;border:1.6px solid #8a8a8a;border-radius:8px;"></div>
<div class="abs" style="left:750.0px;top:689.4px;width:2.0px;height:47.2px;background:#858585;"></div>
<div class="abs" style="left:1095.9px;top:689.3px;width:2.0px;height:47.3px;background:#858585;"></div>
<!-- formula bar -->
<div class="abs" style="left:424.3px;top:792.8px;width:200.9px;height:44.2px;background:#4d4d4d;border:1.5px solid #727272;border-radius:8px;"></div>
<div class="t" style="left:432.0px;top:802.8px;font-size:26px;transform:scaleX(0.8490);transform-origin:0 50%;color:#ffffff;">A1</div>
<svg style="left:596.4px;top:810.5px" width="18" height="10.5" viewBox="0 0 18 10.5"><path d="M0.8 0.8L9.0 9.7L17.2 0.8" fill="none" stroke="#e8e8e8" stroke-width="2" stroke-linecap="round" stroke-linejoin="round"/></svg>
<div class="abs" style="left:643.4px;top:803.0px;width:4.8px;height:4.8px;background:#dcdcdc;"></div>
<div class="abs" style="left:643.4px;top:812.4px;width:4.8px;height:4.8px;background:#dcdcdc;"></div>
<div class="abs" style="left:643.4px;top:821.8px;width:4.8px;height:4.8px;background:#dcdcdc;"></div>
<div class="abs" style="left:666.0px;top:792.8px;width:145.4px;height:44.2px;background:#4d4d4d;border:1.5px solid #727272;border-radius:8px;"></div>
<svg style="left:679.7px;top:803.0px" width="24" height="24" viewBox="0 0 24 24"><path d="M1 1L23 23M23 1L1 23" stroke="#8c8c8c" stroke-width="1.8" fill="none"/></svg>
<svg style="left:723.0px;top:804.0px" width="32" height="22" viewBox="0 0 32 22"><path d="M1 11L10 20L31 1" stroke="#8c8c8c" stroke-width="1.8" fill="none"/></svg>
<div class="t" style="left:773.4px;top:797.5px;font-size:34px;font-style:italic;font-family:'Liberation Serif',serif;color:#e8e8e8;font-weight:bold;">f</div>
<div class="t" style="left:787.0px;top:803.9px;font-size:27px;font-style:italic;font-family:'Liberation Serif',serif;color:#e8e8e8;font-weight:bold;">x</div>
<div class="abs" style="left:820.6px;top:792.8px;width:1701.1px;height:82.0px;background:#4d4d4d;border:1.5px solid #727272;border-radius:8px;"></div>
<div class="t" style="left:841.0px;top:803.2px;font-size:25.5px;letter-spacing:-0.25px;color:#ffffff;">Type of design</div>
<svg style="left:2493.7px;top:806.5px" width="18.5" height="10.8" viewBox="0 0 18.5 10.8"><path d="M0.8 10L9.25 0.8L17.7 10" fill="none" stroke="#e8e8e8" stroke-width="2" stroke-linecap="round" stroke-linejoin="round"/></svg>
<!-- grid -->
<div class="abs" style="left:408.0px;top:889.4px;width:2091.3px;height:36.7px;background:#505050;"></div>
<div class="abs" style="left:408.0px;top:926.1px;width:53.0px;height:568.2px;background:#505050;"></div>
<div class="abs" style="left:461.0px;top:926.1px;width:2038.3px;height:568.2px;background:#ffffff;"></div>
<div class="abs" style="left:461.0px;top:889.4px;width:189.6px;height:36.7px;background:#6a6a6a;"></div>
<div class="abs" style="left:408.0px;top:926.1px;width:53.0px;height:38.0px;background:#6a6a6a;"></div>
<svg style="left:426.0px;top:895.0px" width="30" height="27" viewBox="0 0 30 27"><path d="M30 0V27H0Z" fill="#e9e9e9"/></svg>
<div class="abs" style="left:650px;top:926.1px;width:1px;height:568.2px;background:#dadada"></div><div class="abs" style="left:890px;top:926.1px;width:1px;height:568.2px;background:#dadada"></div><div class="abs" style="left:968px;top:926.1px;width:1px;height:568.2px;background:#dadada"></div><div class="abs" style="left:1181px;top:926.1px;width:1px;height:568.2px;background:#dadada"></div><div class="abs" style="left:1400px;top:926.1px;width:1px;height:568.2px;background:#dadada"></div><div class="abs" style="left:1617px;top:926.1px;width:1px;height:568.2px;background:#dadada"></div><div class="abs" style="left:1841px;top:926.1px;width:1px;height:568.2px;background:#dadada"></div><div class="abs" style="left:1903px;top:926.1px;width:1px;height:568.2px;background:#dadada"></div><div class="abs" style="left:2064px;top:926.1px;width:1px;height:568.2px;background:#dadada"></div><div class="abs" style="left:2408px;top:926.1px;width:1px;height:568.2px;background:#dadada"></div><div class="abs" style="left:461px;top:964px;width:2038.3px;height:1px;background:#dadada"></div><div class="abs" style="left:461px;top:1002px;width:2038.3px;height:1px;background:#dadada"></div><div class="abs" style="left:461px;top:1040px;width:2038.3px;height:1px;background:#dadada"></div><div class="abs" style="left:461px;top:1078px;width:2038.3px;height:1px;background:#dadada"></div><div class="abs" style="left:461px;top:1116px;width:2038.3px;height:1px;background:#dadada"></div><div class="abs" style="left:461px;top:1154px;width:2038.3px;height:1px;background:#dadada"></div><div class="abs" style="left:461px;top:1192px;width:2038.3px;height:1px;background:#dadada"></div><div class="abs" style="left:461px;top:1230px;width:2038.3px;height:1px;background:#dadada"></div><div class="abs" style="left:461px;top:1268px;width:2038.3px;height:1px;background:#dadada"></div><div class="abs" style="left:461px;top:1306px;width:2038.3px;height:1px;background:#dadada"></div><div class="abs" style="left:461px;top:1344px;width:2038.3px;height:1px;background:#dadada"></div><div class="abs" style="left:461px;top:1382px;width:2038.3px;height:1px;background:#dadada"></div><div class="abs" style="left:461px;top:1420px;width:2038.3px;height:1px;background:#dadada"></div><div class="abs" style="left:461px;top:1458px;width:2038.3px;height:1px;background:#dadada"></div><div class="abs" style="left:460.2px;top:889.4px;width:1.6px;height:36.7px;background:#8a8a8a"></div><div class="abs" style="left:649.8px;top:889.4px;width:1.6px;height:36.7px;background:#8a8a8a"></div><div class="abs" style="left:889.4px;top:889.4px;width:1.6px;height:36.7px;background:#8a8a8a"></div><div class="abs" style="left:967.5px;top:889.4px;width:1.6px;height:36.7px;background:#8a8a8a"></div><div class="abs" style="left:1180.6px;top:889.4px;width:1.6px;height:36.7px;background:#8a8a8a"></div><div class="abs" style="left:1399.6px;top:889.4px;width:1.6px;height:36.7px;background:#8a8a8a"></div><div class="abs" style="left:1616.4px;top:889.4px;width:1.6px;height:36.7px;background:#8a8a8a"></div><div class="abs" style="left:1840.5px;top:889.4px;width:1.6px;height:36.7px;background:#8a8a8a"></div><div class="abs" style="left:1902.5px;top:889.4px;width:1.6px;height:36.7px;background:#8a8a8a"></div><div class="abs" style="left:2063.7px;top:889.4px;width:1.6px;height:36.7px;background:#8a8a8a"></div><div class="abs" style="left:2407.5px;top:889.4px;width:1.6px;height:36.7px;background:#8a8a8a"></div><div class="abs" style="left:408px;top:925.3px;width:53px;height:1.6px;background:#8a8a8a"></div><div class="abs" style="left:408px;top:963.3px;width:53px;height:1.6px;background:#8a8a8a"></div><div class="abs" style="left:408px;top:1001.3px;width:53px;height:1.6px;background:#8a8a8a"></div><div class="abs" style="left:408px;top:1039.3px;width:53px;height:1.6px;background:#8a8a8a"></div><div class="abs" style="left:408px;top:1077.3px;width:53px;height:1.6px;background:#8a8a8a"></div><div class="abs" style="left:408px;top:1115.3px;width:53px;height:1.6px;background:#8a8a8a"></div><div class="abs" style="left:408px;top:1153.3px;width:53px;height:1.6px;background:#8a8a8a"></div><div class="abs" style="left:408px;top:1191.3px;width:53px;height:1.6px;background:#8a8a8a"></div><div class="abs" style="left:408px;top:1229.3px;width:53px;height:1.6px;background:#8a8a8a"></div><div class="abs" style="left:408px;top:1267.3px;width:53px;height:1.6px;background:#8a8a8a"></div><div class="abs" style="left:408px;top:1305.3px;width:53px;height:1.6px;background:#8a8a8a"></div><div class="abs" style="left:408px;top:1343.3px;width:53px;height:1.6px;background:#8a8a8a"></div><div class="abs" style="left:408px;top:1381.3px;width:53px;height:1.6px;background:#8a8a8a"></div><div class="abs" style="left:408px;top:1419.3px;width:53px;height:1.6px;background:#8a8a8a"></div><div class="abs" style="left:408px;top:1457.3px;width:53px;height:1.6px;background:#8a8a8a"></div><div class="abs" style="left:408px;top:1495.3px;width:53px;height:1.6px;background:#8a8a8a"></div><div class="abs" style="left:460.2px;top:926.1px;width:1.6px;height:568.2px;background:#8a8a8a"></div><div class="abs" style="left:461px;top:925.3px;width:2038.3px;height:1.6px;background:#8a8a8a"></div>
<div class="t" style="left:547.8px;top:898.3px;font-size:24px;color:#f2f2f2;">A</div>
<div class="t" style="left:762.4px;top:898.3px;font-size:24px;color:#f2f2f2;">B</div>
<div class="t" style="left:920.6px;top:898.3px;font-size:24px;color:#f2f2f2;">C</div>
<div class="t" style="left:1066.2px;top:898.3px;font-size:24px;color:#f2f2f2;">D</div>
<div class="t" style="left:1282.9px;top:898.3px;font-size:24px;color:#f2f2f2;">E</div>
<div class="t" style="left:1501.5px;top:898.3px;font-size:24px;color:#f2f2f2;">F</div>
<div class="t" style="left:1719.9px;top:898.3px;font-size:24px;color:#f2f2f2;">G</div>
<div class="t" style="left:1863.6px;top:898.3px;font-size:24px;color:#f2f2f2;">H</div>
<div class="t" style="left:1980.6px;top:898.3px;font-size:24px;color:#f2f2f2;">I</div>
<div class="t" style="left:2230.4px;top:898.3px;font-size:24px;color:#f2f2f2;">J</div>
<div class="abs" style="left:2470px;top:890px;width:29.3px;height:36px;overflow:hidden"><div class="t" style="left:21.0px;top:8.3px;font-size:24px;color:#f2f2f2;">K</div>
</div>
<div class="t" style="left:427.2px;top:935.3px;font-size:25.5px;color:#f2f2f2;">1</div>
<div class="t" style="left:427.2px;top:973.3px;font-size:25.5px;color:#f2f2f2;">2</div>
<div class="t" style="left:427.2px;top:1011.3px;font-size:25.5px;color:#f2f2f2;">3</div>
<div class="t" style="left:427.2px;top:1049.3px;font-size:25.5px;color:#f2f2f2;">4</div>
<div class="t" style="left:427.2px;top:1087.3px;font-size:25.5px;color:#f2f2f2;">5</div>
<div class="t" style="left:427.2px;top:1125.3px;font-size:25.5px;color:#f2f2f2;">6</div>
<div class="t" style="left:427.2px;top:1163.3px;font-size:25.5px;color:#f2f2f2;">7</div>
<div class="t" style="left:427.2px;top:1201.3px;font-size:25.5px;color:#f2f2f2;">8</div>
<div class="t" style="left:427.2px;top:1239.3px;font-size:25.5px;color:#f2f2f2;">9</div>
<div class="t" style="left:420.1px;top:1277.3px;font-size:25.5px;color:#f2f2f2;">10</div>
<div class="t" style="left:421.1px;top:1315.3px;font-size:25.5px;color:#f2f2f2;">11</div>
<div class="t" style="left:420.1px;top:1353.3px;font-size:25.5px;color:#f2f2f2;">12</div>
<div class="t" style="left:420.1px;top:1391.3px;font-size:25.5px;color:#f2f2f2;">13</div>
<div class="t" style="left:420.1px;top:1429.3px;font-size:25.5px;color:#f2f2f2;">14</div>
<div class="t" style="left:420.1px;top:1467.3px;font-size:25.5px;color:#f2f2f2;">15</div>
<div class="t" style="left:467.0px;top:935.3px;font-size:25.5px;font-weight:bold;letter-spacing:-0.06px;color:#0a0a0a;">Type of design</div>
<div class="t" style="left:657.5px;top:935.3px;font-size:25.5px;font-weight:bold;letter-spacing:0.02px;color:#0a0a0a;">Maximum # stages</div>
<div class="t" style="left:896.2px;top:935.3px;font-size:25.5px;font-weight:bold;letter-spacing:-0.65px;color:#0a0a0a;">Stage</div>
<div class="t" style="left:974.3px;top:935.3px;font-size:25.5px;font-weight:bold;letter-spacing:0.41px;color:#0a0a0a;">Information rate</div>
<div class="t" style="left:1186.9px;top:935.3px;font-size:25.5px;font-weight:bold;letter-spacing:-0.33px;color:#0a0a0a;">Significance level</div>
<div class="t" style="left:1406.4px;top:935.3px;font-size:25.5px;font-weight:bold;letter-spacing:0.32px;color:#0a0a0a;">Type II error rate</div>
<div class="t" style="left:1623.2px;top:935.3px;font-size:25.5px;font-weight:bold;letter-spacing:0.41px;color:#0a0a0a;">Two-sided power</div>
<div class="t" style="left:1847.3px;top:935.3px;font-size:25.5px;font-weight:bold;letter-spacing:0.07px;color:#0a0a0a;">Test</div>
<div class="t" style="left:1925.3px;top:935.3px;font-size:25.5px;font-weight:bold;letter-spacing:-0.05px;color:#0a0a0a;">Tolerance</div>
<div class="t" style="left:2071.4px;top:935.3px;font-size:25.5px;font-weight:bold;letter-spacing:-0.06px;color:#0a0a0a;">Cumulative alpha spending</div>
<div class="abs" style="left:2410px;top:930px;width:89.3px;height:120px;overflow:hidden"><div class="t" style="left:9.9px;top:5.3px;font-size:25.5px;font-weight:bold;letter-spacing:-0.56px;color:#0a0a0a;">Critical</div>
<div class="t" style="left:13.8px;top:41.8px;font-size:26.5px;letter-spacing:0.16px;color:#0a0a0a;">2,7965</div>
<div class="t" style="left:13.8px;top:79.8px;font-size:26.5px;letter-spacing:0.16px;color:#0a0a0a;">1,9774</div>
</div>
<div class="t" style="left:467.0px;top:971.8px;font-size:26.5px;transform:scaleX(0.8261);transform-origin:0 50%;color:#0a0a0a;">OF</div>
<div class="t" style="left:869.9px;top:971.8px;font-size:26.5px;color:#0a0a0a;">2</div>
<div class="t" style="left:947.6px;top:971.8px;font-size:26.5px;color:#0a0a0a;">1</div>
<div class="t" style="left:1138.2px;top:971.8px;font-size:26.5px;color:#0a0a0a;">0,5</div>
<div class="t" style="left:1328.6px;top:971.8px;font-size:26.5px;color:#0a0a0a;">0,025</div>
<div class="t" style="left:1574.8px;top:971.8px;font-size:26.5px;color:#0a0a0a;">0,2</div>
<div class="t" style="left:1687.0px;top:971.8px;font-size:26.5px;transform:scaleX(0.8362);transform-origin:0 50%;color:#0a0a0a;">FALSCH</div>
<div class="t" style="left:1883.4px;top:971.8px;font-size:26.5px;color:#0a0a0a;">1</div>
<div class="t" style="left:1918.4px;top:971.8px;font-size:26.5px;color:#0a0a0a;">0,00000001</div>
<div class="t" style="left:2247.6px;top:971.8px;font-size:26.5px;color:#0a0a0a;">0,002582893</div>
<div class="t" style="left:467.0px;top:1009.8px;font-size:26.5px;transform:scaleX(0.8261);transform-origin:0 50%;color:#0a0a0a;">OF</div>
<div class="t" style="left:869.9px;top:1009.8px;font-size:26.5px;color:#0a0a0a;">2</div>
<div class="t" style="left:947.6px;top:1009.8px;font-size:26.5px;color:#0a0a0a;">2</div>
<div class="t" style="left:1160.3px;top:1009.8px;font-size:26.5px;color:#0a0a0a;">1</div>
<div class="t" style="left:1328.6px;top:1009.8px;font-size:26.5px;color:#0a0a0a;">0,025</div>
<div class="t" style="left:1574.8px;top:1009.8px;font-size:26.5px;color:#0a0a0a;">0,2</div>
<div class="t" style="left:1687.0px;top:1009.8px;font-size:26.5px;transform:scaleX(0.8362);transform-origin:0 50%;color:#0a0a0a;">FALSCH</div>
<div class="t" style="left:1883.4px;top:1009.8px;font-size:26.5px;color:#0a0a0a;">1</div>
<div class="t" style="left:1918.4px;top:1009.8px;font-size:26.5px;color:#0a0a0a;">0,00000001</div>
<div class="t" style="left:2262.3px;top:1009.8px;font-size:26.5px;color:#0a0a0a;">0,02499999</div>
<div class="abs" style="left:459.6px;top:924.6px;width:192.6px;height:41.0px;background:none;border:3px solid #1e7145;"></div>
<div class="abs" style="left:647.5px;top:960.5px;width:9.0px;height:9.0px;background:#1e7145;border:1.5px solid #fff;"></div>
<div class="abs" style="left:2499.3px;top:889.4px;width:40.0px;height:606.9px;background:#4e4e4e;"></div>
<div class="abs" style="left:2502.2px;top:889.1px;width:33.4px;height:607.0px;background:#3c3c3c;border-radius:17px;"></div>
<div class="abs" style="left:2511.0px;top:922.8px;width:16.0px;height:374.2px;background:#c6c6c6;border-radius:8px;"></div>
<svg style="left:2510.0px;top:899.4px" width="18" height="13" viewBox="0 0 18 13"><path d="M9 1 Q10 1 11 2.2L17 11 Q17.5 12.5 16 12.5H2Q0.5 12.5 1 11L7 2.2Q8 1 9 1Z" fill="#d9d9d9"/></svg>
<svg style="left:2510.0px;top:1473.5px" width="18" height="13" viewBox="0 0 18 13"><path d="M9 12 Q10 12 11 10.8L17 2 Q17.5 0.5 16 0.5H2Q0.5 0.5 1 2L7 10.8Q8 12 9 12Z" fill="#d9d9d9"/></svg>
<!-- sheet tabs -->
<div class="abs" style="left:408.0px;top:1494.3px;width:2131.0px;height:65.0px;background:linear-gradient(90deg,#4a4b52 0%,#4b4c50 40%,#4d4d4f 100%);"></div>
<svg style="left:449.0px;top:1515.6px" width="14" height="19" viewBox="0 0 14 19"><path d="M12.5 1L2 9.5L12.5 18" fill="none" stroke="#8d8d8d" stroke-width="2"/></svg>
<svg style="left:514.0px;top:1515.6px" width="14" height="19" viewBox="0 0 14 19"><path d="M1.5 1L12 9.5L1.5 18" fill="none" stroke="#d4d4d4" stroke-width="2"/></svg>
<svg style="left:613.3px;top:1494.3px" width="140.4" height="56" viewBox="0 0 140.4 56"><path d="M0 0 Q10 0 10 10 V45.5 Q10 55.5 20 55.5 H120.4 Q130.4 55.5 130.4 45.5 V10 Q130.4 0 140.4 0 Z" fill="#ffffff"/></svg>
<div class="t" style="left:641.2px;top:1509.0px;font-size:27px;letter-spacing:0.23px;color:#1b1b1b;-webkit-text-stroke:.5px #1b1b1b;">Design</div>
<div class="abs" style="left:640.0px;top:1540.0px;width:88.0px;height:4.2px;background:#107c41;border-radius:2px;"></div>
<div class="abs" style="left:752.3px;top:1508.4px;width:1.6px;height:35.8px;background:#8c8c8c;"></div>
<div class="t" style="left:783.0px;top:1514.1px;font-size:27px;letter-spacing:-0.05px;color:#ececec;">Design Characteristics</div>
<div class="abs" style="left:1081.1px;top:1508.4px;width:1.6px;height:35.8px;background:#8c8c8c;"></div>
<div class="t" style="left:1108.8px;top:1514.1px;font-size:27px;letter-spacing:-0.39px;color:#ececec;">Sample Size</div>
<div class="abs" style="left:1283.1px;top:1508.4px;width:1.6px;height:35.8px;background:#8c8c8c;"></div>
<div class="t" style="left:1312.5px;top:1514.1px;font-size:27px;letter-spacing:0.82px;color:#ececec;">Meta information</div>
<div class="abs" style="left:1554.7px;top:1522.0px;width:5.4px;height:5.4px;background:#d9d9d9;border-radius:3px;"></div>
<div class="abs" style="left:1563.2px;top:1522.0px;width:5.4px;height:5.4px;background:#d9d9d9;border-radius:3px;"></div>
<div class="abs" style="left:1571.7px;top:1522.0px;width:5.4px;height:5.4px;background:#d9d9d9;border-radius:3px;"></div>
<svg style="left:1618.9px;top:1513.3px" width="22" height="23" viewBox="0 0 22 23"><path d="M11 0V23M0 11.5H22" stroke="#e0e0e0" stroke-width="2" fill="none"/></svg>
<div class="abs" style="left:1693.0px;top:1516.7px;width:3.6px;height:3.6px;background:#d9d9d9;border-radius:2px;"></div>
<div class="abs" style="left:1693.0px;top:1524.6px;width:3.6px;height:3.6px;background:#d9d9d9;border-radius:2px;"></div>
<div class="abs" style="left:1693.0px;top:1532.5px;width:3.6px;height:3.6px;background:#d9d9d9;border-radius:2px;"></div>
<div class="abs" style="left:1727.0px;top:1508.1px;width:774.4px;height:33.2px;background:#3b3b3b;border-radius:17px;"></div>
<svg style="left:1737.4px;top:1516.0px" width="14" height="17" viewBox="0 0 14 17"><path d="M13 1.5Q13 0 11.5 0.8L1 7.6Q0 8.5 1 9.4L11.5 16.2Q13 17 13 15.5Z" fill="#d9d9d9"/></svg>
<svg style="left:2477.7px;top:1516.0px" width="14" height="17" viewBox="0 0 14 17"><path d="M1 1.5Q1 0 2.5 0.8L13 7.6Q14 8.5 13 9.4L2.5 16.2Q1 17 1 15.5Z" fill="#d9d9d9"/></svg>
<div class="abs" style="left:1761.1px;top:1516.7px;width:583.9px;height:16.0px;background:#c6c6c6;border-radius:8px;"></div>
<!-- status bar -->
<div class="abs" style="left:408.0px;top:1558.5px;width:2131.0px;height:45.0px;background:#505050;border-top:1.6px solid #3b3b3b;"></div>
<div class="t" style="left:431.0px;top:1571.2px;font-size:21px;letter-spacing:-0.49px;color:#f4f4f4;">Bereit</div>
<div class="t" style="left:557.3px;top:1571.2px;font-size:21px;letter-spacing:-0.28px;color:#f4f4f4;">Barrierefreiheit: Keine Probleme</div>
<div class="abs" style="left:1916.2px;top:1560.0px;width:79.8px;height:42.0px;background:#5f5f5f;"></div>
<div class="abs" style="left:2168.3px;top:1579.3px;width:14.2px;height:1.6px;background:#d9d9d9;"></div>
<div class="abs" style="left:2194.6px;top:1579.3px;width:198.2px;height:1.6px;background:#d9d9d9;"></div>
<div class="abs" style="left:2289.0px;top:1570.6px;width:9.9px;height:21.1px;background:#c6c6c6;"></div>
<svg style="left:2404.4px;top:1572.5px" width="15" height="15" viewBox="0 0 15 15"><path d="M7.5 0V15M0 7.5H15" stroke="#d9d9d9" stroke-width="1.6" fill="none"/></svg>
<div class="t" style="left:2446.6px;top:1572.4px;font-size:20.5px;letter-spacing:-0.81px;color:#f4f4f4;">100 %</div>
<svg style="left:0.0px;top:0.0px" width="3323" height="1647" viewBox="0 0 3323 1647"><path d="M675.4 1492.1L744.2 1419.6L756.5 1431.1L861.1 1363.2L888 1388.8L772.3 1449.4L787.3 1463.1Z" fill="#ff0000" stroke="#5a0000" stroke-width="0.8"/></svg>
<svg style="left:0;top:0" width="3323" height="1647" viewBox="0 0 3323 1647" fill="none" stroke-linecap="butt"><g stroke="#ffffff" stroke-width="2.3"><path d="M892.2 454.9H922.1V484.9H895.9L892.2 481.2Z"/><path d="M897.8 454.9V466.5H915.9V454.9"/><path d="M900.1 484.9V475.0H913.8V484.9"/><path d="M952.2 454.0V466.5H965.1"/><path d="M952.6 466.1L962.4 457.3A 10.2 10.2 0 0 1 974.3 472.0L961.5 485.2"/><path d="M993.5 467.0L998.9 472.4L1004.3 467.0"/><path d="M1112.9 465.0H1127.1"/><path d="M1114.3 470.2L1120.0 475.4L1125.7 470.2"/></g><g stroke="#6e6e6e" stroke-width="2.3"><path d="M1055.8 454.0V466.5H1042.8"/><path d="M1055.3 466.1L1045.5 457.3A 10.2 10.2 0 0 0 1033.6 472.0L1046.4 485.2"/><path d="M1071.4 467.0L1076.8 472.4L1082.3 467.0"/></g><g stroke="#ffffff" stroke-width="2.2"><path d="M1677.7 464.8L1687.2 474.1L1696.6 464.8"/><circle cx="1812.7" cy="464.1" r="8.3"/><path d="M1806.5 471.2L1795.3 482.8"/></g><g stroke="#ffffff" stroke-width="2.2" stroke-linejoin="round"><path d="M2197.7 453.8H2210.2L2219.1 463.9L2203.9 481.8L2188.8 463.9Z"/><path d="M2188.8 463.9H2219.1"/><path d="M2197.7 453.8L2198.9 463.9L2203.9 481.8L2208.9 463.9L2210.2 453.8"/><path d="M2203.9 453.8L2198.9 463.9M2203.9 453.8L2208.9 463.9"/><path d="M2287.9 467.7H2307.9"/><rect x="2385.3" y="460.1" width="17.6" height="17.7" rx="2"/><path d="M2480.4 459.6L2499.5 478.4M2499.5 459.6L2480.4 478.4"/></g><path d="M479.2 604.2L518.8 604.2L518.8 649.8L479.2 649.8Z" fill="#f8c95c" stroke="#1e1e1e" stroke-width="2.2"/><path d="M484.1 609.8L514.9 609.8L514.9 645.1L484.1 645.1Z" fill="#e2e2e2"/><path d="M487.4 602.6H493.2A5.9 5.9 0 0 1 504.9 602.6H510.8V609.6H487.4Z" fill="#e2e2e2" stroke="#1e1e1e" stroke-width="2.2"/><path d="M502.3 617.2L533.7 617.2L533.7 656.5L502.3 656.5Z" fill="#c0c0c0"/><path d="M505.3 620.2L530.7 620.2L530.7 653.5L505.3 653.5Z" fill="#e2e2e2" stroke="#555555" stroke-width="2.2"/><path d="M574.3 593.2L585.1 617.3M585.7 593.2L574.9 617.3" stroke="#444" stroke-width="1.7"/><circle cx="573.9" cy="621.1" r="2.9" stroke="#1e6fc4" stroke-width="1.9"/><circle cx="586.0" cy="621.1" r="2.9" stroke="#1e6fc4" stroke-width="1.9"/><path d="M565.4 646.5L574.7 646.5L578.8 650.2L578.8 672.1L565.4 672.1Z" fill="#e2e2e2" stroke="#555555" stroke-width="2.2"/><path d="M575.6 650.4L597.6 650.4L597.6 678.0L575.6 678.0Z" fill="#c0c0c0"/><path d="M577.6 652.4L586.8 652.4L594.8 660.2L594.8 675.7L577.6 675.7Z" fill="#e2e2e2" stroke="#555555" stroke-width="2.2"/><path d="M586.8 652.4L586.8 660.2L594.8 660.2" stroke="#555555" stroke-width="2.2"/><path d="M581.9 666.1H590.0M581.9 669.8H590.0" stroke="#1e1e1e" stroke-width="1.8"/><path d="M592.0 698.4L595.3 700.9L589.7 710.9L585.3 708.0Z" fill="#e2e2e2" stroke="#555555" stroke-width="2" stroke-linejoin="round"/><path d="M580.9 702.1L592.2 711.5L589.1 715.3L577.8 705.9Z" fill="#e2e2e2" stroke="#555555" stroke-width="2" stroke-linejoin="round"/><path d="M565.3 711.3L577.8 706.8L587.8 715.9L578.4 725.7Z" fill="#e2e2e2" stroke="#4a3000" stroke-width="2" stroke-linejoin="round"/><path d="M571.3 716.6L582.8 720.9L578.4 725.3Z" fill="#f8c95c" stroke="#4a3000" stroke-width="1.5" stroke-linejoin="round"/><rect x="675.9" y="696.9" width="30.1" height="29.3" fill="#e4e4e4"/><path d="M676.9 697.1V724.9" stroke="#111" stroke-width="1.8" stroke-dasharray="2 2.3"/><path d="M690.9 697.1V724.9" stroke="#111" stroke-width="1.8" stroke-dasharray="2 2.3"/><path d="M705.0 697.1V724.9" stroke="#111" stroke-width="1.8" stroke-dasharray="2 2.3"/><path d="M676.1 697.9H706.0" stroke="#111" stroke-width="1.8" stroke-dasharray="2 2.3"/><path d="M676.1 711.5H706.0" stroke="#111" stroke-width="1.8" stroke-dasharray="2 2.3"/><path d="M675.9 725.9H706.0" stroke="#000" stroke-width="2.2"/><path d="M769.6 710.5L781.1 699.6L789.2 709.5L777.8 719.7Z" fill="#e8e8e8" stroke="#444444" stroke-width="2" stroke-linejoin="round"/><path d="M778.6 701.8V699.4A2.3 2.3 0 0 1 783.4 699.4V708.3" stroke="#444444" stroke-width="2"/><path d="M786.7 705.6Q791.7 703.1 792.7 710.5Q792.9 715.5 791.4 717.0Q791.1 709.3 786.7 705.6Z" fill="#1a4f8f"/><rect x="764.0" y="721.1" width="32.0" height="7.7" fill="#ffff00"/><rect x="846.0" y="721.1" width="32.0" height="7.7" fill="#ff0000"/><path d="M1001.9 593.8H1029.9" stroke="#444444" stroke-width="1.9"/><path d="M1005.9 601.9H1025.9" stroke="#444444" stroke-width="1.9"/><path d="M1001.9 610.1H1029.9" stroke="#444444" stroke-width="1.9"/><path d="M1053.9 600.0H1081.9" stroke="#444444" stroke-width="1.9"/><path d="M1057.9 607.9H1077.9" stroke="#444444" stroke-width="1.9"/><path d="M1053.9 616.1H1081.9" stroke="#444444" stroke-width="1.9"/><path d="M1105.9 607.9H1133.9" stroke="#444444" stroke-width="1.9"/><path d="M1109.9 616.1H1129.9" stroke="#444444" stroke-width="1.9"/><path d="M1105.9 624.1H1133.9" stroke="#444444" stroke-width="1.9"/><path d="M1001.9 648.0H1029.9" stroke="#444444" stroke-width="1.9"/><path d="M1001.9 656.1H1021.8" stroke="#444444" stroke-width="1.9"/><path d="M1001.9 663.9H1029.9" stroke="#444444" stroke-width="1.9"/><path d="M1001.9 672.1H1021.8" stroke="#444444" stroke-width="1.9"/><path d="M1053.9 648.0H1081.9" stroke="#444444" stroke-width="1.9"/><path d="M1057.9 656.1H1077.9" stroke="#444444" stroke-width="1.9"/><path d="M1053.9 663.9H1081.9" stroke="#444444" stroke-width="1.9"/><path d="M1057.9 672.1H1077.9" stroke="#444444" stroke-width="1.9"/><path d="M1105.9 648.0H1133.9" stroke="#444444" stroke-width="1.9"/><path d="M1113.9 656.1H1133.9" stroke="#444444" stroke-width="1.9"/><path d="M1105.9 663.9H1133.9" stroke="#444444" stroke-width="1.9"/><path d="M1113.9 672.1H1133.9" stroke="#444444" stroke-width="1.9"/><path d="M1001.9 700.0H1029.9" stroke="#444444" stroke-width="1.9"/><path d="M1018.2 708.1H1029.9" stroke="#444444" stroke-width="1.9"/><path d="M1018.2 716.1H1029.9" stroke="#444444" stroke-width="1.9"/><path d="M1001.9 724.1H1029.9" stroke="#444444" stroke-width="1.9"/><path d="M1053.9 700.0H1081.9" stroke="#444444" stroke-width="1.9"/><path d="M1070.2 708.1H1081.9" stroke="#444444" stroke-width="1.9"/><path d="M1070.2 716.1H1081.9" stroke="#444444" stroke-width="1.9"/><path d="M1053.9 724.1H1081.9" stroke="#444444" stroke-width="1.9"/><path d="M1013.8 711.9H1002.8M1007.3 707.6L1002.8 711.9L1007.3 716.3" stroke="#1a62b0" stroke-width="2.2"/><path d="M1054.2 711.9H1065.2M1060.7 707.6L1065.2 711.9L1060.7 716.3" stroke="#1a62b0" stroke-width="2.2"/><rect x="1157.0" y="646.2" width="27.7" height="27.4" fill="#e4e4e4" stroke="#444444" stroke-width="2.1"/><path d="M1171.0 646.2V651.4M1171.0 668.5V673.6" stroke="#1e1e1e" stroke-width="2.1"/><rect x="1157.0" y="652.2" width="27.7" height="15.5" fill="#e4e4e4" stroke="#1a62b0" stroke-width="2.1"/><path d="M1160.7 659.9H1181.2M1165.2 655.7L1160.7 659.9L1165.2 664.2M1176.7 655.7L1181.2 659.9L1176.7 664.2" stroke="#1a62b0" stroke-width="2.1"/><path d="M1187.4 609.1Q1188.6 617.6 1173.6 617.6M1179.8 611.6L1173.3 617.6L1179.8 623.9" stroke="#1a62b0" stroke-width="2.1"/><path d="M1120.3 726.1L1141.0 705.8M1133.9 705.3H1141.6V713.1" stroke="#1a62b0" stroke-width="2.1"/><rect x="1269.2" y="652.4" width="29.6" height="17.0" fill="#e4e4e4" stroke="#4a4a4a" stroke-width="2"/><path d="M1276.9 656.7L1273.8 656.7L1273.8 665.2L1276.9 665.2" stroke="#4a4a4a" stroke-width="1.8" fill="none"/><ellipse cx="1284.1" cy="660.9" rx="3.2" ry="4.6" stroke="#4a4a4a" stroke-width="1.8"/><path d="M1291.3 656.7L1294.5 656.7L1294.5 660.2" stroke="#4a4a4a" stroke-width="1.8" fill="none"/><path d="M1284.8 662.9V673.7A7.3 2.6 0 0 0 1299.4 673.7V662.9Z" fill="#ececec" stroke="#4a3000" stroke-width="2"/><path d="M1284.8 668.3A7.3 2.6 0 0 0 1299.4 668.3" stroke="#4a3000" stroke-width="1.8"/><ellipse cx="1292.1" cy="662.9" rx="7.3" ry="2.8" fill="#f4b942" stroke="#4a3000" stroke-width="2"/><path d="M1285.7 705.7L1269.0 705.7" stroke="#1a62b0" stroke-width="2.2" fill="none"/><path d="M1275.7 699.6L1269.0 705.7L1275.7 711.8" stroke="#1a62b0" stroke-width="2.2" fill="none"/><path d="M1320.4 720.1L1336.8 720.1" stroke="#1a62b0" stroke-width="2.2" fill="none"/><path d="M1330.2 714.1L1336.8 720.1L1330.2 726.2" stroke="#1a62b0" stroke-width="2.2" fill="none"/><rect x="1483.1" y="596.3" width="29.6" height="25.3" fill="#e4e4e4" stroke="#4a4a4a" stroke-width="2"/><path d="M1483.1 604.7L1512.7 604.7" stroke="#4a4a4a" stroke-width="2" fill="none"/><path d="M1483.1 613.2L1512.7 613.2" stroke="#4a4a4a" stroke-width="2" fill="none"/><path d="M1488.7 596.3L1488.7 621.6" stroke="#4a4a4a" stroke-width="2" fill="none"/><path d="M1507.1 596.3L1507.1 621.6" stroke="#4a4a4a" stroke-width="2" fill="none"/><rect x="1489.2" y="596.3" width="9.9" height="7.5" fill="#ec8a8e" stroke="#8b1a1e" stroke-width="2"/><rect x="1489.2" y="614.1" width="13.9" height="7.5" fill="#ec8a8e" stroke="#8b1a1e" stroke-width="2"/><rect x="1490.2" y="605.1" width="5.1" height="7.8" fill="#a9d3f5" stroke="#1a62b0" stroke-width="1.8"/><rect x="1483.1" y="648.7" width="29.6" height="25.1" fill="#e4e4e4" stroke="#4a4a4a" stroke-width="2"/><path d="M1483.1 654.9L1512.7 654.9" stroke="#4a4a4a" stroke-width="2" fill="none"/><path d="M1483.1 665.2L1512.7 665.2" stroke="#4a4a4a" stroke-width="2" fill="none"/><path d="M1493.0 648.7L1493.0 673.7" stroke="#4a4a4a" stroke-width="2" fill="none"/><path d="M1503.1 648.7L1503.1 673.7" stroke="#4a4a4a" stroke-width="2" fill="none"/><rect x="1494.0" y="655.9" width="18.7" height="17.8" fill="#a9d3f5" stroke="#1a62b0" stroke-width="2"/><path d="M1503.1 655.9L1503.1 673.7" stroke="#1a62b0" stroke-width="2" fill="none"/><path d="M1494.0 665.2L1512.7 665.2" stroke="#1a62b0" stroke-width="2" fill="none"/><rect x="1483.1" y="700.6" width="29.6" height="25.1" fill="#e4e4e4" stroke="#4a4a4a" stroke-width="2"/><path d="M1483.1 705.7L1512.7 705.7" stroke="#4a4a4a" stroke-width="2" fill="none"/><path d="M1483.1 718.4L1512.7 718.4" stroke="#4a4a4a" stroke-width="2" fill="none"/><path d="M1488.4 700.6L1488.4 725.7" stroke="#4a4a4a" stroke-width="2" fill="none"/><path d="M1507.1 700.6L1507.1 725.7" stroke="#4a4a4a" stroke-width="2" fill="none"/><rect x="1488.9" y="706.2" width="17.7" height="11.8" fill="#6aaad9" stroke="#1a62b0" stroke-width="2"/><path d="M1512.8 658.3L1498.7 672.1" stroke="#d6d6d6" stroke-width="5.5" stroke-linecap="round"/><path d="M1512.8 658.3L1499.3 671.5" stroke="#6a6a6a" stroke-width="3.6" stroke-linecap="round"/><path d="M1512.3 658.8L1500.1 670.7" stroke="#e0e0e0" stroke-width="1.4" stroke-linecap="round"/><path d="M1499.9 667.7Q1494.3 667.7 1492.4 673.3Q1489.9 675.5 1485.5 674.2Q1495.6 680.2 1501.8 672.1Z" fill="#a9d3f5" stroke="#1a4f8f" stroke-width="1.8"/><path d="M1512.8 710.3L1498.7 724.1" stroke="#d6d6d6" stroke-width="5.5" stroke-linecap="round"/><path d="M1512.8 710.3L1499.3 723.4" stroke="#6a6a6a" stroke-width="3.6" stroke-linecap="round"/><path d="M1512.3 710.8L1500.1 722.7" stroke="#e0e0e0" stroke-width="1.4" stroke-linecap="round"/><path d="M1499.9 719.7Q1494.3 719.7 1492.4 725.3Q1489.9 727.5 1485.5 726.2Q1495.6 732.2 1501.8 724.1Z" fill="#a9d3f5" stroke="#1a4f8f" stroke-width="1.8"/><rect x="1851.9" y="597.7" width="54.4" height="42.0" fill="#e4e4e4" stroke="#555" stroke-width="2"/><path d="M1865.4 597.7L1865.4 639.7" stroke="#222" stroke-width="2" fill="none"/><path d="M1892.6 597.7L1892.6 639.7" stroke="#222" stroke-width="2" fill="none"/><path d="M1851.9 611.6L1906.3 611.6" stroke="#222" stroke-width="2" fill="none"/><path d="M1851.9 626.0L1906.3 626.0" stroke="#222" stroke-width="2" fill="none"/><rect x="1865.4" y="611.6" width="27.2" height="14.4" fill="#6aaad9" stroke="#1a62b0" stroke-width="2"/><path d="M1863.2 590.0L1894.8 590.0" stroke="#1a62b0" stroke-width="1.8" fill="none"/><path d="M1863.4 587.1L1863.4 592.8" stroke="#1a62b0" stroke-width="1.8" fill="none"/><path d="M1894.6 587.1L1894.6 592.8" stroke="#1a62b0" stroke-width="1.8" fill="none"/><circle cx="2015.9" cy="611.6" r="19.8" fill="#e2e2e2" stroke="#555" stroke-width="2"/><path d="M2001.1 626.9L1980.0 648.2" stroke="#555" stroke-width="2.2" fill="none"/><rect x="2116.3" y="596.4" width="53.6" height="53.1" fill="none" stroke="#d83b01" stroke-width="2.2"/><rect x="2122.1" y="602.1" width="17.3" height="17.7" fill="none" stroke="#d83b01" stroke-width="2"/><rect x="2146.9" y="602.1" width="17.3" height="17.7" fill="none" stroke="#d83b01" stroke-width="2"/><rect x="2122.1" y="626.5" width="17.3" height="17.7" fill="none" stroke="#d83b01" stroke-width="2"/><rect x="2146.9" y="626.5" width="17.3" height="17.7" fill="none" stroke="#d83b01" stroke-width="2"/><rect x="2265.9" y="595.9" width="54.2" height="54.0" fill="#e4e4e4" stroke="#555" stroke-width="2"/><rect x="2265.9" y="595.9" width="54.2" height="7.1" fill="#9a9a9a" stroke="#555" stroke-width="2"/><path d="M2265.9 619.8L2320.2 619.8" stroke="#444" stroke-width="1.8" fill="none"/><path d="M2265.9 634.9L2320.2 634.9" stroke="#444" stroke-width="1.8" fill="none"/><path d="M2284.1 603.0L2284.1 649.9" stroke="#444" stroke-width="1.8" fill="none"/><path d="M2302.0 603.0L2302.0 649.9" stroke="#444" stroke-width="1.8" fill="none"/><path d="M2303.6 632.0L2320.2 649.7" stroke="#d8d8d8" stroke-width="6" fill="none"/><path d="M2303.6 632.0L2319.7 649.3" stroke="#555" stroke-width="2.6" fill="none"/><circle cx="2291.4" cy="619.4" r="19.6" fill="#ececec" stroke="#d4d4d4" stroke-width="3"/><circle cx="2291.4" cy="619.4" r="17.6" fill="#ececec" stroke="#555" stroke-width="2"/><rect x="2282.1" y="616.5" width="5.5" height="9.5" fill="#9a9a9a" stroke="#333" stroke-width="1.6"/><rect x="2287.6" y="608.3" width="6.6" height="17.7" fill="#e8e8e8" stroke="#333" stroke-width="1.6"/><rect x="2294.3" y="612.1" width="6.0" height="13.9" fill="#a9d3f5" stroke="#1a4f8f" stroke-width="1.6"/><path d="M2090.1 538.7L2108.0 538.7L2108.0 550.6L2097.8 550.6L2092.5 555.9L2092.5 550.6L2090.1 550.6Z" stroke="#262626" stroke-width="2" fill="none" stroke-linejoin="round"/><path d="M2327.8 546.4L2322.2 546.4L2322.2 557.9L2338.8 557.9L2338.8 552.4" stroke="#16241b" stroke-width="2" fill="none" /><path d="M2328.2 552.9Q2328.2 542.7 2335.1 542.7" stroke="#16241b" stroke-width="2" fill="none"/><path d="M2335.1 537.3L2342.4 542.7L2335.1 548.2Z" stroke="#16241b" stroke-width="2" fill="none" stroke-linejoin="round"/><rect x="1942.7" y="1568.4" width="24.1" height="23.4" fill="none" stroke="#f4f4f4" stroke-width="2"/><path d="M1950.7 1568.4L1950.7 1591.8" stroke="#f4f4f4" stroke-width="2" fill="none"/><path d="M1958.9 1568.4L1958.9 1591.8" stroke="#f4f4f4" stroke-width="2" fill="none"/><path d="M1942.7 1576.1L1966.8 1576.1" stroke="#f4f4f4" stroke-width="2" fill="none"/><path d="M1942.7 1584.1L1966.8 1584.1" stroke="#f4f4f4" stroke-width="2" fill="none"/><rect x="2023.2" y="1568.4" width="25.6" height="23.4" fill="none" stroke="#f4f4f4" stroke-width="2"/><rect x="2029.4" y="1573.1" width="13.4" height="13.9" fill="none" stroke="#f4f4f4" stroke-width="1.8"/><path d="M2032.9 1576.9L2039.6 1576.9" stroke="#f4f4f4" stroke-width="1.6" fill="none"/><path d="M2032.9 1580.1L2039.6 1580.1" stroke="#f4f4f4" stroke-width="1.6" fill="none"/><path d="M2032.9 1583.3L2039.6 1583.3" stroke="#f4f4f4" stroke-width="1.6" fill="none"/><rect x="2103.0" y="1568.4" width="25.8" height="23.4" fill="none" stroke="#f4f4f4" stroke-width="2"/><path d="M2103.0 1580.3L2119.9 1580.3L2119.9 1568.4" stroke="#f4f4f4" stroke-width="2" fill="none"/><path d="M2111.7 1568.4L2111.7 1580.3" stroke="#f4f4f4" stroke-width="2" fill="none"/><circle cx="533.2" cy="1570.9" r="3" stroke="#f4f4f4" stroke-width="1.7" fill="none"/><path d="M522.1 1573.8Q524.3 1579.1 529.3 1579.6Q530.0 1586.2 526.1 1591.6" stroke="#f4f4f4" stroke-width="1.8" fill="none" stroke-linecap="round"/><path d="M544.3 1573.8Q542.1 1579.1 537.1 1579.6Q537.1 1583.6 538.6 1585.7" stroke="#f4f4f4" stroke-width="1.8" fill="none" stroke-linecap="round"/><path d="M522.1 1573.8Q533.2 1577.9 544.3 1573.8" stroke="#f4f4f4" stroke-width="1.8" fill="none" stroke-linecap="round"/><path d="M535.0 1588.9L539.6 1593.2L550.2 1583.6" stroke="#f4f4f4" stroke-width="1.8" fill="none"/><path d="M628.9 762.9V750.1H641.8" stroke="#1a1a1a" stroke-width="1.7" fill="none"/><path d="M634.0 755.1L642.6 763.7" stroke="#1a1a1a" stroke-width="1.7" fill="none"/><path d="M642.9 755.2V764.05H634.2" stroke="#1a1a1a" stroke-width="1.7" fill="none"/><path d="M952.5 762.9V750.1H965.4" stroke="#1a1a1a" stroke-width="1.7" fill="none"/><path d="M957.6 755.1L966.2 763.7" stroke="#1a1a1a" stroke-width="1.7" fill="none"/><path d="M966.5 755.2V764.05H957.8" stroke="#1a1a1a" stroke-width="1.7" fill="none"/><path d="M1220.2 762.9V750.1H1233.2" stroke="#1a1a1a" stroke-width="1.7" fill="none"/><path d="M1225.4 755.1L1234.0 763.7" stroke="#1a1a1a" stroke-width="1.7" fill="none"/><path d="M1234.3 755.2V764.05H1225.6" stroke="#1a1a1a" stroke-width="1.7" fill="none"/><path d="M1433.8 762.9V750.1H1446.7" stroke="#1a1a1a" stroke-width="1.7" fill="none"/><path d="M1438.9 755.1L1447.5 763.7" stroke="#1a1a1a" stroke-width="1.7" fill="none"/><path d="M1447.8 755.2V764.05H1439.1" stroke="#1a1a1a" stroke-width="1.7" fill="none"/></svg>
<svg style="left:439.7px;top:453.0px" width="32.3" height="32" viewBox="0 0 32.3 32"><rect x="7" y="0" width="25" height="32" rx="2" fill="#21a366"/><rect x="19.5" y="0" width="12.5" height="8" fill="#33c481"/><rect x="19.5" y="8" width="12.5" height="8" fill="#21a366"/><rect x="7" y="16" width="25" height="8" fill="#107c41"/><rect x="7" y="24" width="25" height="8" rx="2" fill="#185c37"/><rect x="7" y="8" width="12.5" height="8" fill="#107c41"/><rect x="9" y="8" width="13" height="19" rx="1.5" fill="#0a5a2c" opacity=".55"/><rect x="0" y="6.5" width="20" height="19.5" rx="2" fill="#107c41"/><text x="10" y="22" font-family="Liberation Sans" font-weight="bold" font-size="17" fill="#fff" text-anchor="middle" stroke="none">X</text></svg>

</div></div>
</div>
</body>
</html>
